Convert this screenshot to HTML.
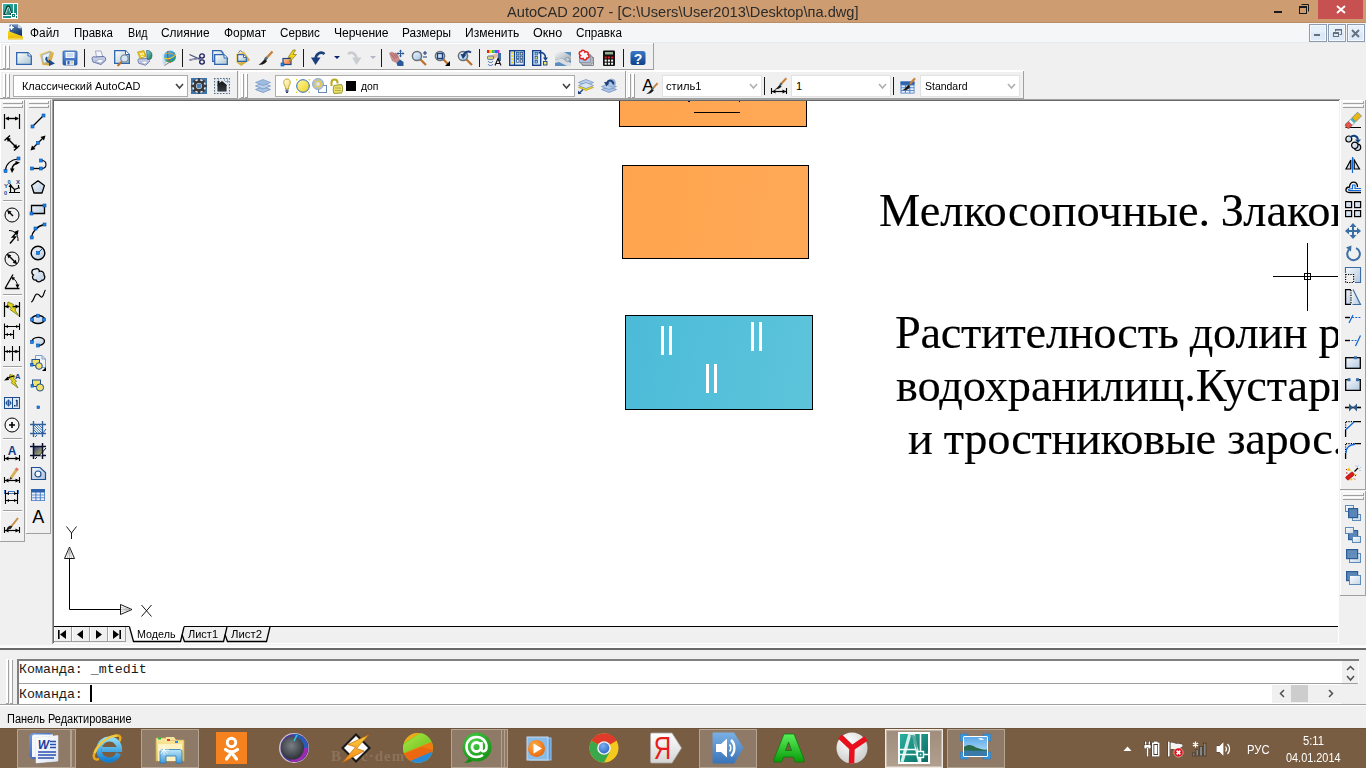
<!DOCTYPE html>
<html lang="ru"><head><meta charset="utf-8"><title>AutoCAD 2007</title>
<style>
*{box-sizing:border-box;margin:0;padding:0}
html,body{width:1366px;height:768px;overflow:hidden}
body{position:relative;background:#f0f0f0;font-family:"Liberation Sans",sans-serif;font-size:12px;color:#000}
div,span.tx,svg{position:absolute}
svg{overflow:visible}
.tx{white-space:nowrap;display:block}
.f-serif{font-family:"Liberation Serif",serif}
.f-mono{font-family:"Liberation Mono",monospace}
.f-b{font-weight:bold}
#draw{overflow:hidden;background:#fff}
#draw .tx{-webkit-text-stroke:0.15px #000}
</style></head>
<body>
<!-- title bar -->
<div style="left:0px;top:0px;width:1366px;height:22px;background:#cd9c71;"></div>
<div style="left:0px;top:22px;width:1366px;height:1px;background:#b98d66;"></div>
<svg style="left:2px;top:3px" width="16" height="16" viewBox="0 0 16 16"><rect x="0" y="0" width="16" height="16" fill="#fff"/><defs><linearGradient id="gapp" x1="0" y1="0" x2="1" y2="1"><stop offset="0" stop-color="#35b8a8"/><stop offset="1" stop-color="#0b7a70"/></linearGradient></defs><rect x="1" y="1" width="14" height="14" fill="url(#gapp)"/><path d="M2.5 12L5.5 3.5H7L9.5 12" fill="none" stroke="#0a3f3a" stroke-width="2.2"/><path d="M3.5 11L5.8 4.5H6.8L8.5 10" fill="none" stroke="#e4f6f3" stroke-width="0.9"/><path d="M1 12.5H15M11.5 1V15" fill="none" stroke="#fff" stroke-width="1"/><rect x="9.5" y="10.5" width="4" height="4" fill="#0b7a70" stroke="#fff" stroke-width="1"/><rect x="11" y="12" width="1" height="1" fill="#fff"/></svg>
<span class="tx" style="left:507px;top:1px;height:22px;line-height:22px;font-size:15px;color:#2b2b2b;transform:scaleX(0.9743);transform-origin:0 0;">AutoCAD 2007 - [C:\Users\User2013\Desktop\па.dwg]</span>
<div style="left:1318px;top:0px;width:45px;height:19px;background:#c75050;"></div>
<div style="left:1274px;top:11px;width:8px;height:2px;background:#1a1a1a;"></div>
<svg style="left:1298px;top:3px" width="12" height="12" viewBox="0 0 12 12"><path d="M3.5 1.5H10.5V8.5" fill="none" stroke="#1a1a1a" stroke-width="1"/><rect x="1.5" y="3.5" width="7" height="7" fill="none" stroke="#1a1a1a" stroke-width="1"/><rect x="1" y="3" width="8" height="2" fill="#1a1a1a"/></svg>
<svg style="left:1336px;top:5px" width="10" height="9" viewBox="0 0 10 9"><path d="M1 1 L9 8 M9 1 L1 8" stroke="#fff" stroke-width="1.9" fill="none"/></svg>
<!-- menu bar -->
<div style="left:0px;top:23px;width:1366px;height:19px;background:#f5f6f7;"></div>
<div style="left:0px;top:42px;width:1366px;height:1px;background:#e9eaeb;"></div>
<svg style="left:8px;top:24px" width="16" height="16" viewBox="0 0 16 16"><defs><linearGradient id="gdoc" x1="0" y1="0" x2="0.6" y2="1"><stop offset="0" stop-color="#5c82b4"/><stop offset="1" stop-color="#14386a"/></linearGradient></defs><path d="M1.5 0.5H10L14 4V12.5L1.5 8Z" fill="url(#gdoc)"/><path d="M10 0.5L14 4H10Z" fill="#c9d6e8"/><path d="M6 0.5H10V4H14V6L6 2Z" fill="#8fa8cc" fill-opacity="0.5"/><defs><linearGradient id="gdoc2" x1="0" y1="0" x2="0" y2="1"><stop offset="0" stop-color="#f8d820"/><stop offset="1" stop-color="#e8b808"/></linearGradient></defs><path d="M0 7L15 12.5V15.5H0Z" fill="url(#gdoc2)"/><path d="M0.5 14.8H14.5" fill="none" stroke="#fbe98a" stroke-width="0.8"/><path d="M3.5 1V6M1 3.5H6" fill="none" stroke="#fff" stroke-width="1"/><path d="M1.8 1.8L5.2 5.2M5.2 1.8L1.8 5.2" fill="none" stroke="#fff" stroke-width="0.6"/><circle cx="3.5" cy="3.5" r="1" fill="#fff"/></svg>
<span class="tx" style="left:30px;top:24px;height:18px;line-height:18px;font-size:12px;transform:scaleX(0.9898);transform-origin:0 0;">Файл</span>
<span class="tx" style="left:74px;top:24px;height:18px;line-height:18px;font-size:12px;transform:scaleX(0.9572);transform-origin:0 0;">Правка</span>
<span class="tx" style="left:128px;top:24px;height:18px;line-height:18px;font-size:12px;transform:scaleX(0.8936);transform-origin:0 0;">Вид</span>
<span class="tx" style="left:161px;top:24px;height:18px;line-height:18px;font-size:12px;transform:scaleX(0.9924);transform-origin:0 0;">Слияние</span>
<span class="tx" style="left:224px;top:24px;height:18px;line-height:18px;font-size:12px;transform:scaleX(0.9923);transform-origin:0 0;">Формат</span>
<span class="tx" style="left:280px;top:24px;height:18px;line-height:18px;font-size:12px;transform:scaleX(0.971);transform-origin:0 0;">Сервис</span>
<span class="tx" style="left:334px;top:24px;height:18px;line-height:18px;font-size:12px;transform:scaleX(1.0109);transform-origin:0 0;">Черчение</span>
<span class="tx" style="left:402px;top:24px;height:18px;line-height:18px;font-size:12px;transform:scaleX(0.9825);transform-origin:0 0;">Размеры</span>
<span class="tx" style="left:465px;top:24px;height:18px;line-height:18px;font-size:12px;transform:scaleX(1.0031);transform-origin:0 0;">Изменить</span>
<span class="tx" style="left:533px;top:24px;height:18px;line-height:18px;font-size:12px;transform:scaleX(1.0436);transform-origin:0 0;">Окно</span>
<span class="tx" style="left:576px;top:24px;height:18px;line-height:18px;font-size:12px;transform:scaleX(0.9772);transform-origin:0 0;">Справка</span>
<div style="left:1309px;top:24px;width:18px;height:18px;border:1px solid #8b9bb2;background:linear-gradient(#e6f0fa 0%,#e6f0fa 45%,#d9e7f6 50%,#dfebf8 100%);box-shadow:inset 0 0 0 1px #f4f8fd"></div>
<div style="left:1328px;top:24px;width:18px;height:18px;border:1px solid #8b9bb2;background:linear-gradient(#e6f0fa 0%,#e6f0fa 45%,#d9e7f6 50%,#dfebf8 100%);box-shadow:inset 0 0 0 1px #f4f8fd"></div>
<div style="left:1347px;top:24px;width:18px;height:18px;border:1px solid #8b9bb2;background:linear-gradient(#e6f0fa 0%,#e6f0fa 45%,#d9e7f6 50%,#dfebf8 100%);box-shadow:inset 0 0 0 1px #f4f8fd"></div>
<div style="left:1314px;top:34px;width:6px;height:2px;background:#64707f;"></div>
<svg style="left:1332px;top:28px" width="11" height="10" viewBox="0 0 11 10"><path d="M3.5 3.5V1.5H9.5V6.5H7.5" fill="none" stroke="#64707f" stroke-width="1"/><rect x="1.5" y="4.5" width="5" height="4" fill="none" stroke="#64707f"/><rect x="1" y="4" width="6" height="2" fill="#64707f"/><rect x="3" y="1" width="7" height="1.6" fill="#64707f"/></svg>
<svg style="left:1351px;top:29px" width="9" height="9" viewBox="0 0 9 9"><path d="M1 1 L8 8 M8 1 L1 8" stroke="#64707f" stroke-width="1.9" fill="none"/></svg>
<!-- standard toolbar -->
<div style="left:0px;top:43px;width:654px;height:1px;background:#ffffff;"></div>
<div style="left:0px;top:43px;width:1px;height:27px;background:#ffffff;"></div>
<div style="left:0px;top:69px;width:654px;height:1px;background:#a0a0a0;"></div>
<div style="left:653px;top:43px;width:1px;height:27px;background:#a0a0a0;"></div>
<div style="left:3px;top:45px;width:2px;height:23px;background:#ffffff;"></div>
<div style="left:5px;top:46px;width:1px;height:23px;background:#a0a0a0;"></div>
<div style="left:3px;top:68px;width:3px;height:1px;background:#a0a0a0;"></div>
<div style="left:7px;top:45px;width:2px;height:23px;background:#ffffff;"></div>
<div style="left:9px;top:46px;width:1px;height:23px;background:#a0a0a0;"></div>
<div style="left:7px;top:68px;width:3px;height:1px;background:#a0a0a0;"></div>
<svg style="left:16px;top:50px" width="16" height="16" viewBox="0 0 16 16"><defs><linearGradient id="gnew" x1="0" y1="0" x2="1" y2="1"><stop offset="0" stop-color="#ffffff"/><stop offset="1" stop-color="#a9c6d0"/></linearGradient></defs><path d="M0.7 2.7H12L15.3 6V14.3H0.7Z" fill="url(#gnew)" stroke="#2f64ae" stroke-width="1.3"/><path d="M12 2.7V6H15.3" fill="#fff" stroke="#2f64ae" stroke-width="1"/></svg>
<svg style="left:39px;top:50px" width="16" height="16" viewBox="0 0 16 16"><defs><linearGradient id="gop" x1="0" y1="0" x2="1" y2="1"><stop offset="0" stop-color="#f6d978"/><stop offset="1" stop-color="#c9962a"/></linearGradient></defs><path d="M0.5 4L11 0.5L15 3L11 15.5L3.5 15Z" fill="url(#gop)"/><path d="M3 5L11.5 2L8 12L4.5 13.5Z" fill="#eaf1f8" stroke="#8fa9c9" stroke-width="0.8"/><path d="M8 7C6.5 9 7.5 11.5 11 12.5" fill="none" stroke="#1f4a8a" stroke-width="2"/><path d="M10 9.5L16 13.5L10 16Z" fill="#1f4a8a"/></svg>
<svg style="left:62px;top:50px" width="16" height="16" viewBox="0 0 16 16"><defs><linearGradient id="gsv" x1="0" y1="0" x2="0" y2="1"><stop offset="0" stop-color="#6f9fe0"/><stop offset="1" stop-color="#2a5cb0"/></linearGradient></defs><rect x="1" y="1" width="14" height="14" rx="1" fill="url(#gsv)" stroke="#2455a5" stroke-width="0.8"/><rect x="3.5" y="2" width="9" height="6" fill="#eef4fb"/><path d="M5 4H11M5 6H11" fill="none" stroke="#9db9dc" stroke-width="0.8"/><rect x="4" y="10.5" width="8" height="4.5" fill="#dfe7f2"/><rect x="5.5" y="11" width="2" height="3.5" fill="#2a5cb0"/><rect x="9" y="11.5" width="2" height="2" fill="#d9d08a"/></svg>
<div style="left:84px;top:49px;width:1px;height:18px;background:#1a1a1a;"></div>
<svg style="left:91px;top:50px" width="16" height="16" viewBox="0 0 16 16"><path d="M4.5 1H10L12 7H5.5Z" fill="#f4f6fb" stroke="#8c98c0" stroke-width="0.8"/><path d="M1 8.5C1 6.5 3 6.5 4 7L12 6.5C14.5 6.5 15 8.5 14.5 10.5L10 14.5L2 12Z" fill="#c4cde6" stroke="#5c6a9c" stroke-width="0.9"/><path d="M4 11L9 13L13.5 10.5L9.5 9.5Z" fill="#fff" stroke="#8c98c0" stroke-width="0.6"/></svg>
<svg style="left:114px;top:50px" width="16" height="16" viewBox="0 0 16 16"><defs><linearGradient id="gpv" x1="0" y1="0" x2="1" y2="1"><stop offset="0" stop-color="#ffffff"/><stop offset="1" stop-color="#a9c6d0"/></linearGradient></defs><path d="M0.7 0.7H11.5L15.3 4.5V13.3H0.7Z" fill="url(#gpv)" stroke="#2f64ae" stroke-width="1.3"/><path d="M11.5 0.7V4.5H15.3" fill="#fff" stroke="#2f64ae" stroke-width="1"/><path d="M8 11.5L3.5 16" fill="none" stroke="#b8702a" stroke-width="2"/><circle cx="10.5" cy="8.5" r="3.7" fill="#d5e6f6" fill-opacity="0.9" stroke="#7f8a99" stroke-width="1.3"/></svg>
<svg style="left:137px;top:50px" width="16" height="16" viewBox="0 0 16 16"><g transform="translate(0 3) scale(0.85)"><path d="M4.5 1H10L12 7H5.5Z" fill="#f4f6fb" stroke="#8c98c0" stroke-width="0.8"/><path d="M1 8.5C1 6.5 3 6.5 4 7L12 6.5C14.5 6.5 15 8.5 14.5 10.5L10 14.5L2 12Z" fill="#c4cde6" stroke="#5c6a9c" stroke-width="0.9"/><path d="M4 11L9 13L13.5 10.5L9.5 9.5Z" fill="#fff" stroke="#8c98c0" stroke-width="0.6"/></g><defs><linearGradient id="gpb" x1="0" y1="0" x2="1" y2="1"><stop offset="0" stop-color="#7fd0f0"/><stop offset="1" stop-color="#1a7a3a"/></linearGradient></defs><path d="M9.5 0.5C14 0 16.5 4 14 9L10.5 9.5Z" fill="url(#gpb)" stroke="#1f4a6a" stroke-width="0.6"/><path d="M0.5 2L7 0.5L9 6.5L3 8.5Z" fill="#f0c818" stroke="#b08a10" stroke-width="0.6"/><circle cx="4" cy="4" r="0.9" fill="#fff"/><circle cx="6.2" cy="3.8" r="0.9" fill="#fff"/><rect x="4" y="5.8" width="2.5" height="1" fill="#fff"/></svg>
<svg style="left:160px;top:50px" width="16" height="16" viewBox="0 0 16 16"><defs><linearGradient id="gdw" x1="0" y1="0" x2="1" y2="0"><stop offset="0" stop-color="#f6f9fd"/><stop offset="1" stop-color="#b9c9e4"/></linearGradient></defs><path d="M0.5 5L6 3V13L4.5 15.5L0.5 12Z" fill="url(#gdw)"/><path d="M4.5 15.5L10 12" stroke="#7a8190" stroke-width="1" fill="none"/><defs><linearGradient id="ggl" x1="0" y1="0" x2="1" y2="1"><stop offset="0" stop-color="#5fc3ee"/><stop offset="1" stop-color="#0e6fae"/></linearGradient></defs><circle cx="10" cy="6.5" r="6" fill="url(#ggl)"/><path d="M8 1C6.5 5 8 10 11 12.5" fill="none" stroke="#d83a2a" stroke-width="1.1"/><path d="M4.5 8C8 10 13 8 16 4.5" fill="none" stroke="#e8d81c" stroke-width="1.1"/><path d="M5 4C8 2.5 12 3 15 5.5" fill="none" stroke="#f0a030" stroke-width="0.9"/><path d="M6 11C9 12.5 13 11 15 9" fill="none" stroke="#3aa84a" stroke-width="1.1"/></svg>
<div style="left:182px;top:49px;width:1px;height:18px;background:#1a1a1a;"></div>
<svg style="left:189px;top:50px" width="16" height="16" viewBox="0 0 16 16"><path d="M0.5 4.5L11.5 9.5M0.5 10L11.5 8" fill="none" stroke="#4a4f7a" stroke-width="1.3"/><path d="M0.5 9.5L9 8.3V9.3L0.5 10.5Z" fill="#9aa0c0"/><ellipse cx="13" cy="6" rx="2.3" ry="2.1" fill="none" stroke="#141a5a" stroke-width="1.3"/><ellipse cx="13" cy="12" rx="2.3" ry="2.1" fill="none" stroke="#141a5a" stroke-width="1.3"/></svg>
<svg style="left:212px;top:50px" width="16" height="16" viewBox="0 0 16 16"><defs><linearGradient id="gcp1" x1="0" y1="0" x2="1" y2="1"><stop offset="0" stop-color="#ffffff"/><stop offset="1" stop-color="#a9c6d0"/></linearGradient></defs><path d="M0.7 0.7H9L11 3V11.3H0.7Z" fill="url(#gcp1)" stroke="#2f64ae" stroke-width="1.3"/><defs><linearGradient id="gcp2" x1="0" y1="0" x2="1" y2="1"><stop offset="0" stop-color="#ffffff"/><stop offset="1" stop-color="#a9c6d0"/></linearGradient></defs><path d="M2.7 4.7H12L15.3 8V14.3H2.7Z" fill="url(#gcp2)" stroke="#2f64ae" stroke-width="1.3"/><path d="M12 4.7V8H15.3" fill="#fff" stroke="#2f64ae" stroke-width="1"/></svg>
<svg style="left:235px;top:50px" width="16" height="16" viewBox="0 0 16 16"><defs><linearGradient id="gps" x1="0" y1="0" x2="1" y2="1"><stop offset="0" stop-color="#f2d672"/><stop offset="1" stop-color="#c49a2a"/></linearGradient></defs><path d="M1 4L9 1.5L15 10L6 16L1.5 12.5Z" fill="url(#gps)"/><path d="M3.5 3L5 0.5L7.5 2" fill="#fff" stroke="#7a8190" stroke-width="1"/><defs><linearGradient id="gps2" x1="0" y1="0" x2="1" y2="1"><stop offset="0" stop-color="#ffffff"/><stop offset="1" stop-color="#a9c6d0"/></linearGradient></defs><path d="M2.7 4.7H8.5L11.3 7.5V11.3H2.7Z" fill="url(#gps2)" stroke="#2f64ae" stroke-width="1.2"/><path d="M8.5 4.7V7.5H11.3" fill="#fff" stroke="#2f64ae" stroke-width="0.9"/></svg>
<svg style="left:258px;top:50px" width="16" height="16" viewBox="0 0 16 16"><path d="M8.5 8L14.5 1.5" fill="none" stroke="#c8803a" stroke-width="2.4"/><path d="M7 9.5L9 7.5" fill="none" stroke="#4a6a7a" stroke-width="2.6"/><path d="M0.5 14.5C4 13.5 5 10 7 9L9 11C8 13 4.5 15.5 0.5 14.5Z" fill="#1a1a1a"/></svg>
<svg style="left:281px;top:50px" width="16" height="16" viewBox="0 0 16 16"><defs><linearGradient id="gbe" x1="0" y1="0" x2="1" y2="1"><stop offset="0" stop-color="#ffc8a0"/><stop offset="1" stop-color="#f07030"/></linearGradient></defs><rect x="2" y="8.5" width="8" height="6" fill="url(#gbe)" stroke="#1f4a8a" stroke-width="1.2"/><rect x="0" y="13" width="3" height="3" fill="#1787ea" stroke="#0a4ea6" stroke-width="0.6"/><path d="M12 0L7 7.5H10L8.5 12L15.5 4.5H12L14.5 0Z" fill="#f2d21c" stroke="#8a7a10" stroke-width="0.7"/></svg>
<div style="left:303px;top:49px;width:1px;height:18px;background:#1a1a1a;"></div>
<svg style="left:310px;top:50px" width="16" height="16" viewBox="0 0 16 16"><path d="M14.5 4C11 1 5.5 3.5 5.5 9.5" fill="none" stroke="#1a3f7a" stroke-width="2.6"/><path d="M1 7.5L5.5 15L10.5 7.5Z" fill="#1a3f7a"/></svg>
<svg style="left:334px;top:56px" width="6" height="3" viewBox="0 0 6 3"><path d="M0 0H6L3 3Z" fill="#0a246a"/></svg>
<svg style="left:346px;top:50px" width="16" height="16" viewBox="0 0 16 16"><path d="M2 4C5.5 1 10.5 3.5 10.5 9.5" fill="none" stroke="#c9cdd2" stroke-width="2.6"/><path d="M6 7.5L10.5 15L15.5 7.5Z" fill="#c9cdd2"/></svg>
<svg style="left:370px;top:56px" width="6" height="3" viewBox="0 0 6 3"><path d="M0 0H6L3 3Z" fill="#b4b4c8"/></svg>
<div style="left:381px;top:49px;width:1px;height:18px;background:#1a1a1a;"></div>
<svg style="left:388px;top:50px" width="16" height="16" viewBox="0 0 16 16"><path d="M1 3L4 1.5L6 3L8 2.5L10 5L12 10L8.5 13L4 11Z" fill="#c98a8a"/><path d="M3 4L7 9M5 3L8.5 8M7.5 3.5L10 7.5" fill="none" stroke="#a05a5a" stroke-width="0.7"/><path d="M8.5 13L12 9.5L15.5 12V16H9.5Z" fill="#2a5a9a"/><path d="M12.5 0V7M9 3.5H16" fill="none" stroke="#2a5a9a" stroke-width="1"/><path d="M12.5 -0.5L14 1.5H11ZM12.5 7.5L14 5.5H11ZM8.5 3.5L10.5 2V5ZM16.5 3.5L14.5 2V5Z" fill="#2a5a9a"/></svg>
<svg style="left:411px;top:50px" width="16" height="16" viewBox="0 0 16 16"><path d="M9 9L15 15" fill="none" stroke="#b8702a" stroke-width="2.2"/><defs><linearGradient id="gz1" x1="0" y1="0" x2="1" y2="1"><stop offset="0" stop-color="#f2f8fd"/><stop offset="1" stop-color="#9cc2e6"/></linearGradient></defs><circle cx="6" cy="6" r="4.6" fill="url(#gz1)" stroke="#6a7078" stroke-width="1.5"/><path d="M12 3H16M14 1V5M12 7H16" fill="none" stroke="#1a3f7a" stroke-width="1.1"/></svg>
<svg style="left:434px;top:50px" width="16" height="16" viewBox="0 0 16 16"><path d="M9 9L15 15" fill="none" stroke="#b8702a" stroke-width="2.2"/><defs><linearGradient id="gz2" x1="0" y1="0" x2="1" y2="1"><stop offset="0" stop-color="#f2f8fd"/><stop offset="1" stop-color="#9cc2e6"/></linearGradient></defs><circle cx="6" cy="6" r="4.6" fill="url(#gz2)" stroke="#6a7078" stroke-width="1.5"/><rect x="3.5" y="3.5" width="5" height="5" fill="none" stroke="#1a3f7a" stroke-width="1.3"/><path d="M16 11V16H11Z" fill="#000"/></svg>
<svg style="left:457px;top:50px" width="16" height="16" viewBox="0 0 16 16"><path d="M9 9L15 15" fill="none" stroke="#b8702a" stroke-width="2.2"/><defs><linearGradient id="gz3" x1="0" y1="0" x2="1" y2="1"><stop offset="0" stop-color="#f2f8fd"/><stop offset="1" stop-color="#9cc2e6"/></linearGradient></defs><circle cx="6" cy="6" r="4.6" fill="url(#gz3)" stroke="#6a7078" stroke-width="1.5"/><path d="M14 2.5C11 0.5 7 2 6.5 6" fill="none" stroke="#1a3f7a" stroke-width="2"/><path d="M3.5 4L9.5 4.5L6 9Z" fill="#1a3f7a"/></svg>
<div style="left:479px;top:49px;width:1px;height:18px;background:#1a1a1a;"></div>
<svg style="left:486px;top:50px" width="16" height="16" viewBox="0 0 16 16"><rect x="1" y="0" width="2.5" height="3" fill="#e81c1c"/><rect x="3.5" y="0" width="2.5" height="3" fill="#f0d81c"/><rect x="6" y="0" width="2.5" height="3" fill="#3ac83a"/><rect x="8.5" y="0" width="2.5" height="3" fill="#2a6ae8"/><rect x="11" y="0" width="2.5" height="3" fill="#d81cd8"/><path d="M4 6L11 3L13.5 5.5L9 8.5L4 8Z" fill="#e8b8a0"/><rect x="12" y="3" width="3" height="8" fill="#3a6aaa"/><rect x="1.5" y="6" width="6" height="3.5" rx="1" fill="#d8d07a" stroke="#3a6aaa" stroke-width="0.8"/><path d="M2 11C3 13 6 13 7 11M2 14C3 16 6 16 7 14" fill="none" stroke="#3a6aaa" stroke-width="1"/><path d="M9 15.5L12 8.5L15 15.5M10 13.5H14" fill="none" stroke="#111" stroke-width="1.1"/></svg>
<svg style="left:509px;top:50px" width="16" height="16" viewBox="0 0 16 16"><rect x="0.7" y="0.7" width="14.6" height="14.6" fill="#dbe9f8" stroke="#143f8a" stroke-width="1.4"/><path d="M5.5 1V15" fill="none" stroke="#143f8a" stroke-width="1.2"/><rect x="2" y="2" width="2" height="1.8" fill="#f0d81c"/><rect x="2" y="5.2" width="2" height="1.8" fill="#f0d81c"/><rect x="2" y="8.4" width="2" height="1.8" fill="#f0d81c"/><rect x="2" y="11.6" width="2" height="1.8" fill="#f0d81c"/><rect x="7.5" y="2.5" width="2.5" height="2.5" fill="#8fd0e8" stroke="#143f8a" stroke-width="0.7"/><rect x="11.2" y="2.5" width="2.5" height="2.5" fill="#f0e86a" stroke="#143f8a" stroke-width="0.7"/><rect x="7.5" y="6.1" width="2.5" height="2.5" fill="#8fd0e8" stroke="#143f8a" stroke-width="0.7"/><rect x="11.2" y="6.1" width="2.5" height="2.5" fill="#f0e86a" stroke="#143f8a" stroke-width="0.7"/><rect x="7.5" y="9.7" width="2.5" height="2.5" fill="#ffffff" stroke="#143f8a" stroke-width="0.7"/><rect x="11.2" y="9.7" width="2.5" height="2.5" fill="#f0e86a" stroke="#143f8a" stroke-width="0.7"/></svg>
<svg style="left:532px;top:50px" width="16" height="16" viewBox="0 0 16 16"><rect x="0.7" y="0.7" width="8" height="14.6" fill="#dbe9f8" stroke="#143f8a" stroke-width="1.4"/><rect x="3" y="2.5" width="2.5" height="2.5" fill="#8fd0e8" stroke="#143f8a" stroke-width="0.7"/><rect x="3" y="6.5" width="2.5" height="2.5" fill="#f0e86a" stroke="#143f8a" stroke-width="0.7"/><rect x="3" y="10.5" width="2.5" height="2.5" fill="#8fd0e8" stroke="#143f8a" stroke-width="0.7"/><path d="M6.5 3C10.5 1.5 13.5 4 13.5 8" fill="none" stroke="#143f8a" stroke-width="1.6"/><path d="M11 7.5H16L13.5 11Z" fill="#143f8a"/><rect x="11.5" y="11.5" width="3.5" height="3.5" fill="#f0e86a" stroke="#143f8a" stroke-width="0.9"/></svg>
<svg style="left:555px;top:50px" width="16" height="16" viewBox="0 0 16 16"><defs><linearGradient id="gss" x1="0" y1="0" x2="1" y2="1"><stop offset="0" stop-color="#f4f6f8"/><stop offset="1" stop-color="#9aa4ae"/></linearGradient></defs><rect x="0" y="2" width="16" height="14" fill="#5a8fc0"/><path d="M0 2H9L16 6V11L7 8.5L0 10Z" fill="url(#gss)"/><path d="M0 10L7 8.5L16 13V16H12L4 12L0 13Z" fill="#d9dde2"/><circle cx="12.5" cy="9.5" r="2.2" fill="#c4cad0" stroke="#8a949e" stroke-width="0.8"/></svg>
<svg style="left:578px;top:50px" width="16" height="16" viewBox="0 0 16 16"><path d="M4.5 7.5H15.5V15.5H4.5Z" fill="#d9dde2" stroke="#6a7078" stroke-width="0.8"/><path d="M3 6H14V14H3Z" fill="#e8ebef" stroke="#6a7078" stroke-width="0.8"/><path d="M1.5 4.5H12.5V12.5H1.5Z" fill="#a9c6e6" stroke="#6a7078" stroke-width="0.6"/><path d="M3 1.5C4.5 -0.5 7 0.5 7 2C9 1 11 2.5 10 4.5C12 5.5 11 8.5 9 8C8.5 10.5 5.5 10.5 5 8.5C2.5 9.5 0.5 7 2.5 5.5C0.5 4.5 1 1.5 3 1.5Z" fill="#f4f6fa" stroke="#e81c1c" stroke-width="1.5"/></svg>
<svg style="left:601px;top:50px" width="16" height="16" viewBox="0 0 16 16"><rect x="2" y="0.5" width="12" height="15.5" rx="1" fill="#111"/><rect x="4" y="2" width="8" height="2.5" fill="#8fae8a"/><rect x="3.7" y="6.5" width="2" height="2" fill="#e81c1c"/><rect x="6.9" y="6.5" width="2" height="2" fill="#e81c1c"/><rect x="10.1" y="6.5" width="2" height="2" fill="#e81c1c"/><rect x="3.7" y="9.6" width="2" height="2" fill="#fff"/><rect x="6.9" y="9.6" width="2" height="2" fill="#fff"/><rect x="10.1" y="9.6" width="2" height="2" fill="#fff"/><rect x="3.7" y="12.7" width="2" height="2" fill="#fff"/><rect x="6.9" y="12.7" width="2" height="2" fill="#fff"/><rect x="10.1" y="12.7" width="2" height="2" fill="#fff"/></svg>
<div style="left:623px;top:49px;width:1px;height:18px;background:#1a1a1a;"></div>
<svg style="left:630px;top:50px" width="16" height="16" viewBox="0 0 16 16"><defs><linearGradient id="ghl" x1="0" y1="0" x2="0" y2="1"><stop offset="0" stop-color="#3a7ac8"/><stop offset="1" stop-color="#0e3f8a"/></linearGradient></defs><rect x="0.5" y="1" width="15" height="14" rx="2.5" fill="url(#ghl)"/><text x="8" y="13.5" font-family="Liberation Sans, sans-serif" font-weight="bold" font-size="14" text-anchor="middle" fill="#fff">?</text></svg>
<!-- workspaces / layers / styles toolbars -->
<div style="left:0px;top:70px;width:1024px;height:1px;background:#ffffff;"></div>
<div style="left:0px;top:71px;width:238px;height:1px;background:#ffffff;"></div>
<div style="left:0px;top:71px;width:1px;height:28px;background:#ffffff;"></div>
<div style="left:0px;top:98px;width:238px;height:1px;background:#a0a0a0;"></div>
<div style="left:237px;top:71px;width:1px;height:28px;background:#a0a0a0;"></div>
<div style="left:3px;top:73px;width:2px;height:24px;background:#ffffff;"></div>
<div style="left:5px;top:74px;width:1px;height:24px;background:#a0a0a0;"></div>
<div style="left:3px;top:97px;width:3px;height:1px;background:#a0a0a0;"></div>
<div style="left:7px;top:73px;width:2px;height:24px;background:#ffffff;"></div>
<div style="left:9px;top:74px;width:1px;height:24px;background:#a0a0a0;"></div>
<div style="left:7px;top:97px;width:3px;height:1px;background:#a0a0a0;"></div>
<div style="left:13px;top:75px;width:175px;height:22px;background:#fff;border:1px solid #acacac;"></div>
<svg style="left:175px;top:83px" width="9" height="6" viewBox="0 0 9 6"><path d="M1 1 L4.5 5 L8 1" fill="none" stroke="#444" stroke-width="1.6"/></svg>
<span class="tx" style="left:22px;top:78px;height:16px;line-height:16px;font-size:11px;transform:scaleX(0.992);transform-origin:0 0;">Классический AutoCAD</span>
<svg style="left:191px;top:78px" width="16" height="16" viewBox="0 0 16 16"><rect x="0" y="0" width="16" height="16" fill="#3f74a8"/><circle cx="8" cy="8" r="7" fill="#e9eef4"/><circle cx="8" cy="8" r="4.2" fill="none" stroke="#3a3a3a" stroke-width="2.6"/><rect x="6.7" y="0.3" width="2.6" height="3.4" fill="#3a3a3a" transform="rotate(0 8 8)"/><rect x="6.7" y="0.3" width="2.6" height="3.4" fill="#3a3a3a" transform="rotate(45 8 8)"/><rect x="6.7" y="0.3" width="2.6" height="3.4" fill="#3a3a3a" transform="rotate(90 8 8)"/><rect x="6.7" y="0.3" width="2.6" height="3.4" fill="#3a3a3a" transform="rotate(135 8 8)"/><rect x="6.7" y="0.3" width="2.6" height="3.4" fill="#3a3a3a" transform="rotate(180 8 8)"/><rect x="6.7" y="0.3" width="2.6" height="3.4" fill="#3a3a3a" transform="rotate(225 8 8)"/><rect x="6.7" y="0.3" width="2.6" height="3.4" fill="#3a3a3a" transform="rotate(270 8 8)"/><rect x="6.7" y="0.3" width="2.6" height="3.4" fill="#3a3a3a" transform="rotate(315 8 8)"/><circle cx="8" cy="8" r="2.4" fill="#4a80b8"/></svg>
<svg style="left:214px;top:78px" width="16" height="16" viewBox="0 0 16 16"><rect x="0" y="0" width="16" height="16" fill="#dfe8f2"/><path d="M0.5 0V16M15.5 0V16M0 0.5H16M0 15.5H16" fill="none" stroke="#5a6a7a" stroke-width="1" stroke-dasharray="1.5 1.5"/><path d="M4.5 0V4M10.5 0V3M13.5 0V5M11 3.5H16" fill="none" stroke="#8a9aaa" stroke-width="0.8"/><defs><linearGradient id="ghm" x1="0" y1="0" x2="0" y2="1"><stop offset="0" stop-color="#111"/><stop offset="1" stop-color="#3a3f45"/></linearGradient></defs><path d="M2 7.5L8 2.5L14 7.5H13V14H3V7.5Z" fill="url(#ghm)" stroke="#fff" stroke-width="0.8"/><path d="M3.5 3H5.5V5.5L3.5 7Z" fill="#111"/></svg>
<div style="left:239px;top:71px;width:387px;height:1px;background:#ffffff;"></div>
<div style="left:239px;top:71px;width:1px;height:28px;background:#ffffff;"></div>
<div style="left:239px;top:98px;width:387px;height:1px;background:#a0a0a0;"></div>
<div style="left:625px;top:71px;width:1px;height:28px;background:#a0a0a0;"></div>
<div style="left:241px;top:73px;width:2px;height:24px;background:#ffffff;"></div>
<div style="left:243px;top:74px;width:1px;height:24px;background:#a0a0a0;"></div>
<div style="left:241px;top:97px;width:3px;height:1px;background:#a0a0a0;"></div>
<div style="left:245px;top:73px;width:2px;height:24px;background:#ffffff;"></div>
<div style="left:247px;top:74px;width:1px;height:24px;background:#a0a0a0;"></div>
<div style="left:245px;top:97px;width:3px;height:1px;background:#a0a0a0;"></div>
<svg style="left:255px;top:78px" width="16" height="16" viewBox="0 0 16 16"><path d="M8 8.5L15.5 11.5L8 14.5L0.5 11.5Z" fill="#a9c4e4" stroke="#6a8ab8" stroke-width="0.7"/><path d="M8 5L15.5 8L8 11L0.5 8Z" fill="#b9d0ec" stroke="#6a8ab8" stroke-width="0.7"/><path d="M8 1.5L15.5 4.5L8 7.5L0.5 4.5Z" fill="#9dbce0" stroke="#7a9ac8" stroke-width="0.7"/></svg>
<div style="left:275px;top:75px;width:300px;height:22px;background:#fff;border:1px solid #acacac;"></div>
<svg style="left:562px;top:83px" width="9" height="6" viewBox="0 0 9 6"><path d="M1 1 L4.5 5 L8 1" fill="none" stroke="#444" stroke-width="1.6"/></svg>
<svg style="left:282px;top:78px" width="12" height="16" viewBox="0 0 12 16"><defs><linearGradient id="gbu" x1="0" y1="0" x2="1" y2="1"><stop offset="0" stop-color="#fffbe0"/><stop offset="1" stop-color="#f4e06a"/></linearGradient></defs><path d="M5 1C1.5 1 0.8 5 3 8C3.5 9 3.5 10 3.5 11H6.5C6.5 10 6.5 9 7 8C9.2 5 8.5 1 5 1Z" fill="url(#gbu)" stroke="#b89a1c" stroke-width="0.9"/><rect x="3.5" y="11.5" width="3" height="2.5" fill="#5a6a9a"/><rect x="4" y="14" width="2" height="1" fill="#2a3a6a"/></svg>
<svg style="left:296px;top:78px" width="14" height="16" viewBox="0 0 14 16"><defs><linearGradient id="gsu" x1="0" y1="0" x2="1" y2="1"><stop offset="0" stop-color="#fff8a0"/><stop offset="1" stop-color="#f0d020"/></linearGradient></defs><circle cx="7" cy="8" r="6.3" fill="url(#gsu)" stroke="#2a6ab8" stroke-width="1"/><rect x="0" y="1" width="1.5" height="1.5" fill="#e8d81c"/><rect x="12.5" y="1" width="1.5" height="1.5" fill="#e8d81c"/><rect x="0" y="13.5" width="1.5" height="1.5" fill="#e8d81c"/><rect x="12.5" y="13.5" width="1.5" height="1.5" fill="#e8d81c"/></svg>
<svg style="left:312px;top:78px" width="15" height="16" viewBox="0 0 15 16"><rect x="6.5" y="7.5" width="8" height="7" fill="#fff" stroke="#6a8ab8" stroke-width="1"/><circle cx="6" cy="6" r="5.5" fill="#a9c4e4" stroke="#7a9ac8" stroke-width="0.8"/><circle cx="6" cy="6" r="2.6" fill="#d8e4f2" stroke="#e0c85a" stroke-width="1.4"/><rect x="5.4" y="0.8" width="1.2" height="2" fill="#e0c85a" transform="rotate(0 6 6)"/><rect x="5.4" y="0.8" width="1.2" height="2" fill="#e0c85a" transform="rotate(45 6 6)"/><rect x="5.4" y="0.8" width="1.2" height="2" fill="#e0c85a" transform="rotate(90 6 6)"/><rect x="5.4" y="0.8" width="1.2" height="2" fill="#e0c85a" transform="rotate(135 6 6)"/><rect x="5.4" y="0.8" width="1.2" height="2" fill="#e0c85a" transform="rotate(180 6 6)"/><rect x="5.4" y="0.8" width="1.2" height="2" fill="#e0c85a" transform="rotate(225 6 6)"/><rect x="5.4" y="0.8" width="1.2" height="2" fill="#e0c85a" transform="rotate(270 6 6)"/><rect x="5.4" y="0.8" width="1.2" height="2" fill="#e0c85a" transform="rotate(315 6 6)"/></svg>
<svg style="left:329px;top:78px" width="15" height="16" viewBox="0 0 15 16"><path d="M2.5 8V4.5C2.5 0.5 8.5 0.5 8.5 4.5V5.5" fill="none" stroke="#b8a81c" stroke-width="2"/><path d="M5 7.5L12.5 6.5C14 7.5 14 14.5 12.5 15L5 15.5C4 14 4 9 5 7.5Z" fill="#e8e06a" stroke="#8a8a1c" stroke-width="0.9"/><path d="M6 10H12M6 12.5H12" fill="none" stroke="#a8a03a" stroke-width="0.8"/></svg>
<div style="left:346px;top:81px;width:10px;height:10px;background:#000;"></div>
<span class="tx" style="left:361px;top:78px;height:16px;line-height:16px;font-size:11px;transform:scaleX(0.9463);transform-origin:0 0;">доп</span>
<svg style="left:578px;top:78px" width="16" height="16" viewBox="0 0 16 16"><path d="M8 1.5L15.5 4.5L8 7.5L0.5 4.5Z" fill="#b9d0ec" stroke="#6a8ab8" stroke-width="0.7"/><path d="M8 6.5L15.5 9.5L8 12.5L0.5 9.5Z" fill="#f0d81c" stroke="#b8a01c" stroke-width="0.7"/><path d="M8 4.5L15.5 7.5L8 10.5L0.5 7.5Z" fill="#d8e4f2" stroke="#6a8ab8" stroke-width="0.7"/><path d="M1.5 15L5 11.5" fill="none" stroke="#1a3f7a" stroke-width="1.3"/><path d="M0 16V12.5L3.5 16Z" fill="#1a3f7a"/></svg>
<svg style="left:601px;top:78px" width="16" height="16" viewBox="0 0 16 16"><path d="M8 8.5L15.5 11.5L8 14.5L0.5 11.5Z" fill="#a9c4e4" stroke="#6a8ab8" stroke-width="0.7"/><path d="M8 5.5L15.5 8.5L8 11.5L0.5 8.5Z" fill="#b9d0ec" stroke="#6a8ab8" stroke-width="0.7"/><circle cx="10.5" cy="5" r="4" fill="#a9c4e4" stroke="#7a9ac8" stroke-width="0.6"/><path d="M12.5 6.5C12.5 2 7 1.5 6 5" fill="none" stroke="#1a3f7a" stroke-width="1.8"/><path d="M3 4L8.5 4.5L5.5 8.5Z" fill="#1a3f7a"/></svg>
<div style="left:626px;top:71px;width:398px;height:1px;background:#ffffff;"></div>
<div style="left:626px;top:71px;width:1px;height:28px;background:#ffffff;"></div>
<div style="left:626px;top:98px;width:398px;height:1px;background:#a0a0a0;"></div>
<div style="left:1023px;top:71px;width:1px;height:28px;background:#a0a0a0;"></div>
<div style="left:628px;top:73px;width:2px;height:24px;background:#ffffff;"></div>
<div style="left:630px;top:74px;width:1px;height:24px;background:#a0a0a0;"></div>
<div style="left:628px;top:97px;width:3px;height:1px;background:#a0a0a0;"></div>
<div style="left:632px;top:73px;width:2px;height:24px;background:#ffffff;"></div>
<div style="left:634px;top:74px;width:1px;height:24px;background:#a0a0a0;"></div>
<div style="left:632px;top:97px;width:3px;height:1px;background:#a0a0a0;"></div>
<svg style="left:642px;top:78px" width="16" height="16" viewBox="0 0 16 16"><text x="6" y="13" font-family="Liberation Sans, sans-serif" font-size="17" text-anchor="middle" fill="#000">A</text><g transform="translate(4 4) scale(0.8)"><path d="M8.5 8L14.5 1.5" fill="none" stroke="#c8803a" stroke-width="2.4"/><path d="M7 9.5L9 7.5" fill="none" stroke="#4a6a7a" stroke-width="2.6"/><path d="M0.5 14.5C4 13.5 5 10 7 9L9 11C8 13 4.5 15.5 0.5 14.5Z" fill="#1a1a1a"/></g></svg>
<div style="left:662px;top:75px;width:100px;height:22px;background:#fff;border:1px solid #e2e2e2;"></div>
<svg style="left:749px;top:83px" width="9" height="6" viewBox="0 0 9 6"><path d="M1 1 L4.5 5 L8 1" fill="none" stroke="#b0b0b0" stroke-width="1.6"/></svg>
<span class="tx" style="left:666px;top:78px;height:16px;line-height:16px;font-size:11px;transform:scaleX(1.0157);transform-origin:0 0;">стиль1</span>
<div style="left:764px;top:77px;width:1px;height:18px;background:#1a1a1a;"></div>
<svg style="left:771px;top:78px" width="16" height="16" viewBox="0 0 16 16"><path d="M0.5 10V16M15.5 10V16" fill="none" stroke="#000" stroke-width="1.1"/><path d="M1 13.5H15" fill="none" stroke="#000" stroke-width="1.2"/><path d="M1 13.5L4.5 11.5V15.5Z" fill="#000"/><path d="M15 13.5L11.5 11.5V15.5Z" fill="#000"/><g transform="translate(3 -1) scale(0.85)"><path d="M8.5 8L14.5 1.5" fill="none" stroke="#c8803a" stroke-width="2.4"/><path d="M7 9.5L9 7.5" fill="none" stroke="#4a6a7a" stroke-width="2.6"/><path d="M0.5 14.5C4 13.5 5 10 7 9L9 11C8 13 4.5 15.5 0.5 14.5Z" fill="#1a1a1a"/></g></svg>
<div style="left:791px;top:75px;width:100px;height:22px;background:#fff;border:1px solid #e2e2e2;"></div>
<svg style="left:878px;top:83px" width="9" height="6" viewBox="0 0 9 6"><path d="M1 1 L4.5 5 L8 1" fill="none" stroke="#b0b0b0" stroke-width="1.6"/></svg>
<span class="tx" style="left:796px;top:78px;height:16px;line-height:16px;font-size:11px;">1</span>
<div style="left:893px;top:77px;width:1px;height:18px;background:#1a1a1a;"></div>
<svg style="left:900px;top:78px" width="16" height="16" viewBox="0 0 16 16"><rect x="0.5" y="3.5" width="14" height="12" fill="#4a7ec4"/><rect x="0.5" y="3.5" width="14" height="3" fill="#2f62ad"/><rect x="1.5" y="7.5" width="3.4" height="1.8" fill="#e9f0fa"/><rect x="5.9" y="7.5" width="3.4" height="1.8" fill="#e9f0fa"/><rect x="10.3" y="7.5" width="3.4" height="1.8" fill="#e9f0fa"/><rect x="1.5" y="10.2" width="3.4" height="1.8" fill="#e9f0fa"/><rect x="5.9" y="10.2" width="3.4" height="1.8" fill="#e9f0fa"/><rect x="10.3" y="10.2" width="3.4" height="1.8" fill="#e9f0fa"/><rect x="1.5" y="12.9" width="3.4" height="1.8" fill="#e9f0fa"/><rect x="5.9" y="12.9" width="3.4" height="1.8" fill="#e9f0fa"/><rect x="10.3" y="12.9" width="3.4" height="1.8" fill="#e9f0fa"/><g transform="translate(2 -1) scale(0.9)"><path d="M8.5 8L14.5 1.5" fill="none" stroke="#c8803a" stroke-width="2.4"/><path d="M7 9.5L9 7.5" fill="none" stroke="#4a6a7a" stroke-width="2.6"/><path d="M0.5 14.5C4 13.5 5 10 7 9L9 11C8 13 4.5 15.5 0.5 14.5Z" fill="#1a1a1a"/></g></svg>
<div style="left:920px;top:75px;width:100px;height:22px;background:#fff;border:1px solid #e2e2e2;"></div>
<svg style="left:1007px;top:83px" width="9" height="6" viewBox="0 0 9 6"><path d="M1 1 L4.5 5 L8 1" fill="none" stroke="#b0b0b0" stroke-width="1.6"/></svg>
<span class="tx" style="left:925px;top:78px;height:16px;line-height:16px;font-size:11px;transform:scaleX(0.9519);transform-origin:0 0;">Standard</span>
<!-- dimension + draw toolbars -->
<div style="left:0px;top:100px;width:25px;height:1px;background:#ffffff;"></div>
<div style="left:0px;top:100px;width:1px;height:442px;background:#ffffff;"></div>
<div style="left:0px;top:541px;width:25px;height:1px;background:#a0a0a0;"></div>
<div style="left:24px;top:100px;width:1px;height:442px;background:#a0a0a0;"></div>
<div style="left:3px;top:101px;width:20px;height:1px;background:#ffffff;"></div>
<div style="left:3px;top:103px;width:20px;height:1px;background:#a0a0a0;"></div>
<div style="left:22px;top:101px;width:1px;height:3px;background:#a0a0a0;"></div>
<div style="left:3px;top:101px;width:1px;height:2px;background:#ffffff;"></div>
<div style="left:3px;top:105px;width:20px;height:1px;background:#ffffff;"></div>
<div style="left:3px;top:107px;width:20px;height:1px;background:#a0a0a0;"></div>
<div style="left:22px;top:105px;width:1px;height:3px;background:#a0a0a0;"></div>
<div style="left:3px;top:105px;width:1px;height:2px;background:#ffffff;"></div>
<svg style="left:4px;top:113px" width="16" height="16" viewBox="0 0 16 16"><path d="M0.5 1V16M15.5 1V16" fill="none" stroke="#000" stroke-width="1.2"/><path d="M2 5.5H14" fill="none" stroke="#000" stroke-width="1.4"/><path d="M1 5.5L5 3.5V7.5Z" fill="#000"/><path d="M15 5.5L11 3.5V7.5Z" fill="#000"/></svg>
<svg style="left:4px;top:135px" width="16" height="16" viewBox="0 0 16 16"><path d="M3.5 3.5L12.5 12.5" fill="none" stroke="#000" stroke-width="1.4"/><path d="M0.5 5.5L6 0.5M10 15.5L15.5 10.5" fill="none" stroke="#000" stroke-width="1.4"/><path d="M2.5 2.5L7 3.8L3.8 7Z" fill="#000"/><path d="M13.5 13.5L9 12.2L12.2 9Z" fill="#000"/></svg>
<svg style="left:4px;top:157px" width="16" height="16" viewBox="0 0 16 16"><path d="M1.5 13C2 7 7 2.5 14 2" fill="none" stroke="#000" stroke-width="1.1"/><path d="M8 13C8 9 10.5 6.5 14 6" fill="none" stroke="#000" stroke-width="1.5"/><path d="M16 5.5L11.5 4V8Z" fill="#000"/><path d="M8 16L6 11.5H10.5Z" fill="#000"/><rect x="0" y="12.5" width="3" height="3" fill="#1787ea" stroke="#0a4ea6" stroke-width="0.6"/><rect x="13" y="0" width="3" height="3" fill="#1787ea" stroke="#0a4ea6" stroke-width="0.6"/></svg>
<svg style="left:4px;top:179px" width="16" height="16" viewBox="0 0 16 16"><text x="0" y="8.5" font-family="Liberation Sans, sans-serif" font-weight="bold" font-size="6" fill="#0a3f8f">Y</text><text x="3.5" y="4.5" font-family="Liberation Sans, sans-serif" font-weight="bold" font-size="5.5" fill="#0a3f8f">0</text><text x="12" y="4.5" font-family="Liberation Sans, sans-serif" font-weight="bold" font-size="6" fill="#0a3f8f">X</text><text x="0" y="15.5" font-family="Liberation Sans, sans-serif" font-weight="bold" font-size="5.5" fill="#0a3f8f">0</text><path d="M6.5 6.5V14M5 13.5H16M6.5 6.5L10.5 10.5L14.5 9M10.5 10.5V14M14.5 6V9H16" fill="none" stroke="#000" stroke-width="1.2"/><path d="M6.5 4.5L8.5 8H4.5Z" fill="#000"/></svg>
<div style="left:3px;top:200px;width:19px;height:1px;background:#a0a0a0;"></div>
<div style="left:3px;top:201px;width:19px;height:1px;background:#ffffff;"></div>
<svg style="left:4px;top:207px" width="16" height="16" viewBox="0 0 16 16"><circle cx="8" cy="8" r="7" fill="none" stroke="#000" stroke-width="1"/><path d="M9 9L4.5 4.5" fill="none" stroke="#000" stroke-width="1.4"/><path d="M3 3L7.5 4.5L4.5 7.5Z" fill="#000"/></svg>
<svg style="left:4px;top:229px" width="16" height="16" viewBox="0 0 16 16"><path d="M5 1.5C10 1.5 14.5 5 14 12" fill="none" stroke="#000" stroke-width="1"/><path d="M13 3L8.5 8H11.5L6 14.5" fill="none" stroke="#000" stroke-width="1.4"/><path d="M14.5 1L13.8 6L10 3Z" fill="#000"/></svg>
<svg style="left:4px;top:251px" width="16" height="16" viewBox="0 0 16 16"><circle cx="8" cy="8" r="7" fill="none" stroke="#000" stroke-width="1"/><path d="M4.5 4.5L11.5 11.5" fill="none" stroke="#000" stroke-width="1.4"/><path d="M2.8 2.8L7.3 4.3L4.3 7.3Z" fill="#000"/><path d="M13.2 13.2L8.7 11.7L11.7 8.7Z" fill="#000"/></svg>
<svg style="left:4px;top:273px" width="16" height="16" viewBox="0 0 16 16"><path d="M1 15.5H15.5M1 15.5L9 1.5" fill="none" stroke="#000" stroke-width="1.3"/><path d="M8.5 5C11.5 6.5 13.5 10 13.5 13" fill="none" stroke="#000" stroke-width="1"/><path d="M7 4L11 4.5L9 7.5Z" fill="#000"/><path d="M13.5 15.5L11.5 11.5H15.5Z" fill="#000"/></svg>
<div style="left:3px;top:294px;width:19px;height:1px;background:#a0a0a0;"></div>
<div style="left:3px;top:295px;width:19px;height:1px;background:#ffffff;"></div>
<svg style="left:4px;top:301px" width="16" height="16" viewBox="0 0 16 16"><path d="M0.5 1V16M15.5 1V16" fill="none" stroke="#000" stroke-width="1.2"/><path d="M1 5.5H15" fill="none" stroke="#000" stroke-width="1.3"/><path d="M15 5.5L11.5 3.5V7.5Z" fill="#000"/><path d="M1 5.5L4.5 3.5V7.5Z" fill="#000"/><path d="M4 1L9.5 3.5L8.5 6L12 7.5L11 9L14.5 14.5L6 8.5L7.5 7L3.5 4Z" fill="#e8d11c" stroke="#6a7a10" stroke-width="0.8"/></svg>
<svg style="left:4px;top:323px" width="16" height="16" viewBox="0 0 16 16"><path d="M0.5 0.5V16M9.5 7V16M15.5 0.5V7" fill="none" stroke="#000" stroke-width="1.1"/><path d="M1 3.5H15M1 11.5H9" fill="none" stroke="#000" stroke-width="1.1"/><path d="M1 3.5L4 2V5Z" fill="#000"/><path d="M15 3.5L12 2V5Z" fill="#000"/><path d="M1 11.5L4 10V13Z" fill="#000"/><path d="M9 11.5L6 10V13Z" fill="#000"/></svg>
<svg style="left:4px;top:345px" width="16" height="16" viewBox="0 0 16 16"><path d="M0.5 1V16M8.5 1V16M15.5 1V16" fill="none" stroke="#000" stroke-width="1.1"/><path d="M1 6.5H15" fill="none" stroke="#000" stroke-width="1.1"/><path d="M1 6.5L4 5V8Z" fill="#000"/><path d="M8 6.5L5 5V8Z" fill="#000"/><path d="M9 6.5L12 5V8Z" fill="#000"/><path d="M15 6.5L12 5V8Z" fill="#000"/></svg>
<div style="left:3px;top:366px;width:19px;height:1px;background:#a0a0a0;"></div>
<div style="left:3px;top:367px;width:19px;height:1px;background:#ffffff;"></div>
<svg style="left:4px;top:373px" width="16" height="16" viewBox="0 0 16 16"><path d="M6 1.5L11 3L9.5 5.5L12.5 8L11 9.5L14 15L7 9.5L8.5 8L5 5Z" fill="#e8d11c" stroke="#6a7a10" stroke-width="0.8"/><path d="M3 5L10 3" fill="none" stroke="#000" stroke-width="1.3"/><path d="M0 7.5L4 3.5L5 7Z" fill="#000"/><text x="11" y="6" font-family="Liberation Sans, sans-serif" font-weight="bold" font-size="7.5" fill="#0a3f8f">A</text></svg>
<svg style="left:4px;top:395px" width="16" height="16" viewBox="0 0 16 16"><rect x="0.5" y="2.5" width="15" height="11" fill="#dfe8f3" stroke="#1d4f8f" stroke-width="1"/><path d="M8.5 2.5V13.5" fill="none" stroke="#1d4f8f" stroke-width="1"/><circle cx="4.5" cy="8" r="2.3" fill="none" stroke="#1d4f8f" stroke-width="1"/><path d="M4.5 4.5V11.5M1.5 8H7.5" fill="none" stroke="#1d4f8f" stroke-width="0.9"/><rect x="10" y="10" width="1.5" height="1.5" fill="#0a2f6f"/><path d="M13 5V11.5M12 6L13 5" fill="none" stroke="#0a2f6f" stroke-width="1.3"/></svg>
<svg style="left:4px;top:417px" width="16" height="16" viewBox="0 0 16 16"><circle cx="8" cy="8" r="7" fill="#f7f7f7" stroke="#000" stroke-width="1"/><path d="M5 8H11M8 5V11" fill="none" stroke="#000" stroke-width="1.6"/></svg>
<div style="left:3px;top:438px;width:19px;height:1px;background:#a0a0a0;"></div>
<div style="left:3px;top:439px;width:19px;height:1px;background:#ffffff;"></div>
<svg style="left:4px;top:445px" width="16" height="16" viewBox="0 0 16 16"><path d="M0.5 10V16M15.5 10V16" fill="none" stroke="#000" stroke-width="1.1"/><path d="M1 13.5H15" fill="none" stroke="#000" stroke-width="1.2"/><path d="M1 13.5L4.5 11.5V15.5Z" fill="#000"/><path d="M15 13.5L11.5 11.5V15.5Z" fill="#000"/><text x="8" y="9.5" font-family="Liberation Sans, sans-serif" font-weight="bold" font-size="12" text-anchor="middle" fill="#0a3f8f">A</text></svg>
<svg style="left:4px;top:467px" width="16" height="16" viewBox="0 0 16 16"><path d="M0.5 10V16M15.5 10V16" fill="none" stroke="#000" stroke-width="1.1"/><path d="M1 13.5H15" fill="none" stroke="#000" stroke-width="1.2"/><path d="M1 13.5L4.5 11.5V15.5Z" fill="#000"/><path d="M15 13.5L11.5 11.5V15.5Z" fill="#000"/><path d="M7 11L13 2" fill="none" stroke="#d9b15a" stroke-width="3"/><path d="M12.2 3.2L13.5 1.2" fill="none" stroke="#e0706a" stroke-width="3"/><path d="M5.5 13L6.2 10L8.3 11.5Z" fill="#333"/></svg>
<svg style="left:4px;top:489px" width="16" height="16" viewBox="0 0 16 16"><path d="M1.5 1V15M13.5 1V15" fill="none" stroke="#000" stroke-width="1.1"/><path d="M2 4.5H13M2 11.5H13" fill="none" stroke="#000" stroke-width="1.1"/><path d="M4 2.5H11M3 4.5H12" fill="none" stroke="#3f78bf" stroke-width="1.2"/><path d="M2 4.5L5 3V6Z" fill="#000"/><path d="M13 4.5L10 3V6Z" fill="#000"/><path d="M2 11.5L5 10V13Z" fill="#000"/><path d="M13 11.5L10 10V13Z" fill="#000"/><path d="M0.5 1V5M14.5 1V5" fill="none" stroke="#3f78bf" stroke-width="1"/></svg>
<div style="left:3px;top:510px;width:19px;height:1px;background:#a0a0a0;"></div>
<div style="left:3px;top:511px;width:19px;height:1px;background:#ffffff;"></div>
<svg style="left:4px;top:517px" width="16" height="16" viewBox="0 0 16 16"><path d="M0.5 10V16M15.5 10V16" fill="none" stroke="#000" stroke-width="1.1"/><path d="M1 13.5H15" fill="none" stroke="#000" stroke-width="1.2"/><path d="M1 13.5L4.5 11.5V15.5Z" fill="#000"/><path d="M15 13.5L11.5 11.5V15.5Z" fill="#000"/><path d="M6 11L14 1" fill="none" stroke="#c98a45" stroke-width="2"/><path d="M2.5 12.5C4 9 6 8 8.5 9.5L6.5 12Z" fill="#222"/></svg>
<div style="left:26px;top:100px;width:25px;height:1px;background:#ffffff;"></div>
<div style="left:26px;top:100px;width:1px;height:434px;background:#ffffff;"></div>
<div style="left:26px;top:533px;width:25px;height:1px;background:#a0a0a0;"></div>
<div style="left:50px;top:100px;width:1px;height:434px;background:#a0a0a0;"></div>
<div style="left:29px;top:101px;width:20px;height:1px;background:#ffffff;"></div>
<div style="left:29px;top:103px;width:20px;height:1px;background:#a0a0a0;"></div>
<div style="left:48px;top:101px;width:1px;height:3px;background:#a0a0a0;"></div>
<div style="left:29px;top:101px;width:1px;height:2px;background:#ffffff;"></div>
<div style="left:29px;top:105px;width:20px;height:1px;background:#ffffff;"></div>
<div style="left:29px;top:107px;width:20px;height:1px;background:#a0a0a0;"></div>
<div style="left:48px;top:105px;width:1px;height:3px;background:#a0a0a0;"></div>
<div style="left:29px;top:105px;width:1px;height:2px;background:#ffffff;"></div>
<svg style="left:30px;top:113px" width="16" height="16" viewBox="0 0 16 16"><path d="M2.5 13.5L13.5 2.5" fill="none" stroke="#000" stroke-width="1.3"/><rect x="1" y="12" width="3" height="3" fill="#1787ea" stroke="#0a4ea6" stroke-width="0.6"/><rect x="12" y="1" width="3" height="3" fill="#1787ea" stroke="#0a4ea6" stroke-width="0.6"/></svg>
<svg style="left:30px;top:135px" width="16" height="16" viewBox="0 0 16 16"><path d="M3 13L13.5 2.5" fill="none" stroke="#000" stroke-width="1.3"/><path d="M0.5 15.5L2 10.5L5.5 14Z" fill="#000"/><path d="M15.5 0.5L14 5.5L10.5 2Z" fill="#000"/><rect x="6.5" y="6.5" width="3" height="3" fill="#1787ea" stroke="#0a4ea6" stroke-width="0.6"/></svg>
<svg style="left:30px;top:157px" width="16" height="16" viewBox="0 0 16 16"><path d="M2 11.5H11" fill="none" stroke="#000" stroke-width="1.3"/><path d="M11.5 3.5C17.5 3.5 17.5 11.5 11.5 11.5" fill="none" stroke="#000" stroke-width="1.1"/><rect x="0.5" y="10" width="3" height="3" fill="#1787ea" stroke="#0a4ea6" stroke-width="0.6"/><rect x="9.5" y="10" width="3" height="3" fill="#1787ea" stroke="#0a4ea6" stroke-width="0.6"/><rect x="9.5" y="2" width="3" height="3" fill="#1787ea" stroke="#0a4ea6" stroke-width="0.6"/></svg>
<svg style="left:30px;top:179px" width="16" height="16" viewBox="0 0 16 16"><defs><linearGradient id="gpg" x1="0" y1="0" x2="1" y2="1"><stop offset="0" stop-color="#eef3f9"/><stop offset="1" stop-color="#b9cde3"/></linearGradient></defs><path d="M8 1.8L14.4 6.6L12 14H4L1.6 6.6Z" fill="url(#gpg)" stroke="#000" stroke-width="1.3" stroke-linejoin="round"/></svg>
<svg style="left:30px;top:201px" width="16" height="16" viewBox="0 0 16 16"><defs><linearGradient id="grc" x1="0" y1="0" x2="1" y2="1"><stop offset="0" stop-color="#eef3f9"/><stop offset="1" stop-color="#b9cde3"/></linearGradient></defs><path d="M1.5 4.5H14.5V12.5H1.5Z" fill="url(#grc)" stroke="#000" stroke-width="1.3"/><rect x="0" y="11" width="3" height="3" fill="#1787ea" stroke="#0a4ea6" stroke-width="0.6"/><rect x="13" y="3" width="3" height="3" fill="#1787ea" stroke="#0a4ea6" stroke-width="0.6"/></svg>
<svg style="left:30px;top:223px" width="16" height="16" viewBox="0 0 16 16"><path d="M1.5 14.5C2 9 7 3 14.5 1.5" fill="none" stroke="#000" stroke-width="1.3"/><rect x="0.2" y="13" width="3" height="3" fill="#1787ea" stroke="#0a4ea6" stroke-width="0.6"/><rect x="4" y="4" width="3" height="3" fill="#1787ea" stroke="#0a4ea6" stroke-width="0.6"/><rect x="13" y="0" width="3" height="3" fill="#1787ea" stroke="#0a4ea6" stroke-width="0.6"/></svg>
<svg style="left:30px;top:245px" width="16" height="16" viewBox="0 0 16 16"><defs><linearGradient id="gci" x1="0" y1="0" x2="1" y2="1"><stop offset="0" stop-color="#f2f6fa"/><stop offset="1" stop-color="#b9cde3"/></linearGradient></defs><circle cx="8" cy="8" r="6.8" fill="url(#gci)" stroke="#000" stroke-width="1.4"/><path d="M8 8L12 4" fill="none" stroke="#0a4ea6" stroke-width="1"/><rect x="6.5" y="6.5" width="3" height="3" fill="#1787ea" stroke="#0a4ea6" stroke-width="0.6"/></svg>
<svg style="left:30px;top:267px" width="16" height="16" viewBox="0 0 16 16"><defs><linearGradient id="grv" x1="0" y1="0" x2="1" y2="1"><stop offset="0" stop-color="#f2f6fa"/><stop offset="1" stop-color="#b9cde3"/></linearGradient></defs><path d="M5 2.2C7 0.8 9.5 2 9.3 4.5C12 3.5 14.5 5.5 14 8C15.8 10 14.5 13.5 11.5 13.5C10.5 15.5 7 15.5 6 13C3 13.5 1.2 10 3.5 8C0.8 6.5 1.5 2 5 2.2Z" fill="url(#grv)" stroke="#000" stroke-width="1.3"/></svg>
<svg style="left:30px;top:289px" width="16" height="16" viewBox="0 0 16 16"><path d="M1 13C4 13 4 5 7 5S10 9 12 8S14 2 15.5 1" fill="none" stroke="#000" stroke-width="1.2"/></svg>
<svg style="left:30px;top:311px" width="16" height="16" viewBox="0 0 16 16"><defs><linearGradient id="gel" x1="0" y1="0" x2="1" y2="1"><stop offset="0" stop-color="#f2f6fa"/><stop offset="1" stop-color="#b9cde3"/></linearGradient></defs><ellipse cx="8" cy="8.5" rx="6.5" ry="4" fill="url(#gel)" stroke="#000" stroke-width="1.4"/><rect x="0.5" y="7" width="3" height="3" fill="#1787ea" stroke="#0a4ea6" stroke-width="0.6"/><rect x="12.5" y="7" width="3" height="3" fill="#1787ea" stroke="#0a4ea6" stroke-width="0.6"/><rect x="6.5" y="3.2" width="3" height="3" fill="#1787ea" stroke="#0a4ea6" stroke-width="0.6"/></svg>
<svg style="left:30px;top:333px" width="16" height="16" viewBox="0 0 16 16"><defs><linearGradient id="gea" x1="0" y1="0" x2="1" y2="1"><stop offset="0" stop-color="#f2f6fa"/><stop offset="1" stop-color="#b9cde3"/></linearGradient></defs><path d="M2 9C2 3 14.5 3 14.5 8C14.5 11 11 12.5 8.5 12.3" fill="url(#gea)" stroke="#000" stroke-width="1.3"/><rect x="0.5" y="7.5" width="3" height="3" fill="#1787ea" stroke="#0a4ea6" stroke-width="0.6"/><rect x="6.5" y="11" width="3" height="3" fill="#1787ea" stroke="#0a4ea6" stroke-width="0.6"/></svg>
<svg style="left:30px;top:355px" width="16" height="16" viewBox="0 0 16 16"><path d="M5.5 0.5H12L15.5 4V12.5H5.5Z" fill="#eef3fa" stroke="#7f9fc8" stroke-width="1"/><path d="M12 0.5V4H15.5" fill="none" stroke="#7f9fc8" stroke-width="1"/><rect x="2" y="4.5" width="7.5" height="6" fill="#f3e36a" stroke="#1d4f8f" stroke-width="1"/><circle cx="9" cy="11" r="3.3" fill="#f3e36a" stroke="#1d4f8f" stroke-width="1"/><rect x="0.5" y="8.5" width="2.6" height="2.6" fill="#1787ea" stroke="#0a4ea6" stroke-width="0.6"/><path d="M16 12V16H12Z" fill="#000"/></svg>
<svg style="left:30px;top:377px" width="16" height="16" viewBox="0 0 16 16"><rect x="2.5" y="3" width="8" height="6.5" fill="#f3e36a" stroke="#1d4f8f" stroke-width="1"/><circle cx="10" cy="10.5" r="3.6" fill="#f3e36a" stroke="#1d4f8f" stroke-width="1"/><rect x="1" y="7.5" width="2.6" height="2.6" fill="#1787ea" stroke="#0a4ea6" stroke-width="0.6"/></svg>
<svg style="left:30px;top:399px" width="16" height="16" viewBox="0 0 16 16"><rect x="7" y="7" width="2.6" height="2.6" fill="#1787ea" stroke="#0a4ea6" stroke-width="0.6"/></svg>
<svg style="left:30px;top:421px" width="16" height="16" viewBox="0 0 16 16"><rect x="3.5" y="3.5" width="9" height="9" fill="#fff"/><path d="M4 6.5L9.5 12M4 4L12 12M6.5 4L12 9.5M9 4L12 7M4 9L7 12" fill="none" stroke="#3a6fae" stroke-width="1"/><path d="M0 3.5H16M0 12.5H16M3.5 0V16M12.5 0V16" fill="none" stroke="#2e5f9e" stroke-width="1.4"/><path d="M5 16L7 14M12.5 12.5L16 8" fill="none" stroke="#2e5f9e" stroke-width="1"/></svg>
<svg style="left:30px;top:443px" width="16" height="16" viewBox="0 0 16 16"><defs><linearGradient id="ggr" x1="0" y1="0" x2="1" y2="1"><stop offset="0" stop-color="#2a3a8a"/><stop offset="1" stop-color="#c8c050"/></linearGradient></defs><rect x="3.5" y="3.5" width="9" height="9" fill="url(#ggr)"/><path d="M0 3.5H16M0 12.5H16M3.5 0V16M12.5 0V16" fill="none" stroke="#0a1030" stroke-width="1.5"/><path d="M5 16L7 14M9 13L16 5" fill="none" stroke="#0a1030" stroke-width="1"/><path d="M12 12.5H10L12 10Z" fill="#f0f0f0"/></svg>
<svg style="left:30px;top:465px" width="16" height="16" viewBox="0 0 16 16"><defs><linearGradient id="grg" x1="0" y1="0" x2="1" y2="1"><stop offset="0" stop-color="#f4f7fb"/><stop offset="1" stop-color="#a9c0dc"/></linearGradient></defs><path d="M1.5 2.5H10L15.5 7.5V14.5H1.5Z" fill="url(#grg)" stroke="#1d4f8f" stroke-width="1.2"/><circle cx="8" cy="9" r="3" fill="#f4f7fb" stroke="#1d4f8f" stroke-width="1.2"/></svg>
<svg style="left:30px;top:487px" width="16" height="16" viewBox="0 0 16 16"><rect x="1" y="2" width="14" height="12" fill="#4a7ec4"/><rect x="1" y="2" width="14" height="3" fill="#2f62ad"/><rect x="2" y="5.6" width="3.4" height="2" fill="#e9f0fa"/><rect x="6.4" y="5.6" width="3.4" height="2" fill="#e9f0fa"/><rect x="10.8" y="5.6" width="3.4" height="2" fill="#e9f0fa"/><rect x="2" y="8.4" width="3.4" height="2" fill="#e9f0fa"/><rect x="6.4" y="8.4" width="3.4" height="2" fill="#e9f0fa"/><rect x="10.8" y="8.4" width="3.4" height="2" fill="#e9f0fa"/><rect x="2" y="11.2" width="3.4" height="2" fill="#e9f0fa"/><rect x="6.4" y="11.2" width="3.4" height="2" fill="#e9f0fa"/><rect x="10.8" y="11.2" width="3.4" height="2" fill="#e9f0fa"/></svg>
<svg style="left:30px;top:509px" width="16" height="16" viewBox="0 0 16 16"><text x="8.3" y="14" font-family="Liberation Sans, sans-serif" font-size="18" text-anchor="middle" fill="#000">A</text></svg>
<!-- drawing area -->
<div style="left:52px;top:99px;width:1288px;height:1px;background:#a0a0a0;"></div>
<div style="left:53px;top:100px;width:1286px;height:1px;background:#696969;"></div>
<div style="left:52px;top:99px;width:1px;height:545px;background:#a0a0a0;"></div>
<div style="left:53px;top:100px;width:1px;height:543px;background:#696969;"></div>
<div style="left:1338px;top:101px;width:1px;height:543px;background:#ffffff;"></div>
<div style="left:54px;top:643px;width:1286px;height:1px;background:#ffffff;"></div>
<div id="draw" style="left:54px;top:101px;width:1284px;height:525px">
<div style="left:565px;top:-41px;width:188px;height:67px;background:linear-gradient(100deg,#ffa44e,#ffa957);border:1px solid #000;"></div>
<div style="left:640px;top:11px;width:46px;height:1px;background:#000;"></div>
<div style="left:634px;top:0px;width:2px;height:1px;background:#000;"></div>
<div style="left:685px;top:0px;width:1px;height:1px;background:#000;"></div>
<div style="left:568px;top:64px;width:187px;height:94px;background:linear-gradient(100deg,#ffa44e,#ffa957);border:1px solid #000;"></div>
<div style="left:571px;top:214px;width:188px;height:95px;background:linear-gradient(100deg,#4cbbd8,#5dc4db);border:1px solid #000;"></div>
<div style="left:607px;top:225px;width:3px;height:29px;background:#fff;"></div>
<div style="left:615px;top:225px;width:3px;height:29px;background:#fff;"></div>
<div style="left:697px;top:221px;width:3px;height:29px;background:#fff;"></div>
<div style="left:705px;top:221px;width:3px;height:29px;background:#fff;"></div>
<div style="left:652px;top:263px;width:3px;height:29px;background:#fff;"></div>
<div style="left:660px;top:263px;width:3px;height:29px;background:#fff;"></div>
<span class="tx f-serif" style="left:825px;top:80px;height:58px;line-height:58px;font-size:47px;transform:scaleX(0.9872);transform-origin:0 0;word-spacing:-1px;">Мелкосопочные. Злаков</span>
<span class="tx f-serif" style="left:841px;top:202px;height:58px;line-height:58px;font-size:47px;transform:scaleX(0.9872);transform-origin:0 0;letter-spacing:-0.3px;">Растителность долин р</span>
<span class="tx f-serif" style="left:842px;top:255px;height:58px;line-height:58px;font-size:47px;transform:scaleX(0.9872);transform-origin:0 0;letter-spacing:-0.1px;">водохранилищ.Кустарн</span>
<span class="tx f-serif" style="left:854px;top:308px;height:58px;line-height:58px;font-size:47px;transform:scaleX(0.9872);transform-origin:0 0;letter-spacing:-0.33px;">и тростниковые зарос.</span>
<div style="left:1219px;top:175px;width:65px;height:1px;background:#000;"></div>
<div style="left:1253px;top:142px;width:1px;height:68px;background:#000;"></div>
<div style="left:1250px;top:172px;width:7px;height:7px;border:1px solid #000;"></div>
<svg style="left:0px;top:424px" width="100" height="95" viewBox="0 0 100 95"><path d="M15.5 34V84.5H66" fill="none" stroke="#000" stroke-width="1"/><path d="M15.5 22L10.5 33.5H20.5Z" fill="#fff" stroke="#000" stroke-width="0.9"/><path d="M15.5 23L13.5 33M15.5 23L17.5 33M15.5 23V33" fill="none" stroke="#999" stroke-width="0.6"/><path d="M78 84.5L66.5 79.5V89.5Z" fill="#fff" stroke="#000" stroke-width="0.9"/><path d="M77 84.5L67 82.5M77 84.5L67 86.5M77 84.5H67" fill="none" stroke="#999" stroke-width="0.6"/><path d="M12.5 1.5L17.5 8L22.5 1.5M17.5 8V14" fill="none" stroke="#000" stroke-width="0.9"/><path d="M87.5 80L97.5 91.5M97.5 80L87.5 91.5" fill="none" stroke="#000" stroke-width="0.9"/></svg>
</div>
<div style="left:54px;top:626px;width:1284px;height:1px;background:#000;"></div>
<div style="left:54px;top:627px;width:1284px;height:16px;background:#f0f0f0;"></div>
<div style="left:71px;top:627px;width:1px;height:15px;background:#a0a0a0;"></div>
<div style="left:54px;top:627px;width:1px;height:15px;background:#ffffff;"></div>
<div style="left:89px;top:627px;width:1px;height:15px;background:#a0a0a0;"></div>
<div style="left:72px;top:627px;width:1px;height:15px;background:#ffffff;"></div>
<div style="left:107px;top:627px;width:1px;height:15px;background:#a0a0a0;"></div>
<div style="left:90px;top:627px;width:1px;height:15px;background:#ffffff;"></div>
<div style="left:125px;top:627px;width:1px;height:15px;background:#a0a0a0;"></div>
<div style="left:108px;top:627px;width:1px;height:15px;background:#ffffff;"></div>
<div style="left:54px;top:641px;width:72px;height:1px;background:#a0a0a0;"></div>
<svg style="left:55px;top:629px" width="16" height="11" viewBox="0 0 16 11"><rect x="3" y="1" width="1.6" height="9" fill="#000"/><path d="M11 1V10L5 5.5Z" fill="#000"/></svg>
<svg style="left:73px;top:629px" width="16" height="11" viewBox="0 0 16 11"><path d="M10 1V10L4 5.5Z" fill="#000"/></svg>
<svg style="left:91px;top:629px" width="16" height="11" viewBox="0 0 16 11"><path d="M5 1V10L11 5.5Z" fill="#000"/></svg>
<svg style="left:109px;top:629px" width="16" height="11" viewBox="0 0 16 11"><rect x="10.4" y="1" width="1.6" height="9" fill="#000"/><path d="M4 1V10L10 5.5Z" fill="#000"/></svg>
<svg style="left:129px;top:627px" width="142" height="16" viewBox="0 0 142 16"><path d="M0.5 -1L4.5 14.5H51L55 -1Z" fill="#fff"/><path d="M0.5 0L4.5 14.5H51.5L55 0" fill="none" stroke="#000" stroke-width="1.3"/><path d="M53 7.5L55.5 14.5H94.5L98 0" fill="none" stroke="#000" stroke-width="1.3"/><path d="M96 7.5L98.5 14.5H137.5L141 0" fill="none" stroke="#000" stroke-width="1.3"/></svg>
<span class="tx" style="left:137px;top:626px;height:16px;line-height:16px;font-size:11px;transform:scaleX(0.9751);transform-origin:0 0;">Модель</span>
<span class="tx" style="left:188px;top:626px;height:16px;line-height:16px;font-size:11px;transform:scaleX(0.9993);transform-origin:0 0;">Лист1</span>
<span class="tx" style="left:231px;top:626px;height:16px;line-height:16px;font-size:11px;transform:scaleX(1.0327);transform-origin:0 0;">Лист2</span>
<!-- modify + draw order toolbars -->
<div style="left:1340px;top:100px;width:26px;height:1px;background:#ffffff;"></div>
<div style="left:1340px;top:100px;width:1px;height:390px;background:#ffffff;"></div>
<div style="left:1340px;top:489px;width:26px;height:1px;background:#a0a0a0;"></div>
<div style="left:1365px;top:100px;width:1px;height:390px;background:#a0a0a0;"></div>
<div style="left:1343px;top:101px;width:21px;height:1px;background:#ffffff;"></div>
<div style="left:1343px;top:103px;width:21px;height:1px;background:#a0a0a0;"></div>
<div style="left:1363px;top:101px;width:1px;height:3px;background:#a0a0a0;"></div>
<div style="left:1343px;top:101px;width:1px;height:2px;background:#ffffff;"></div>
<div style="left:1343px;top:105px;width:21px;height:1px;background:#ffffff;"></div>
<div style="left:1343px;top:107px;width:21px;height:1px;background:#a0a0a0;"></div>
<div style="left:1363px;top:105px;width:1px;height:3px;background:#a0a0a0;"></div>
<div style="left:1343px;top:105px;width:1px;height:2px;background:#ffffff;"></div>
<svg style="left:1345px;top:113px" width="16" height="16" viewBox="0 0 16 16"><path d="M0.5 14.5H16" fill="none" stroke="#000" stroke-width="1"/><g transform="rotate(-45 8 8)"><rect x="-1" y="5" width="7" height="5.5" rx="2" fill="#e2574c" stroke="#7c2a22" stroke-width="0.6"/><rect x="4.5" y="5" width="3" height="5.5" fill="#f4f4f4" stroke="#3b5f8f" stroke-width="0.5"/><rect x="7.5" y="5" width="2" height="5.5" fill="#43b7c0"/><rect x="9.5" y="5" width="8" height="5.5" fill="#e9b715" stroke="#3b5f8f" stroke-width="0.5"/></g></svg>
<svg style="left:1345px;top:135px" width="16" height="16" viewBox="0 0 16 16"><defs><linearGradient id="gco" x1="0" y1="0" x2="1" y2="1"><stop offset="0" stop-color="#f4f7fb"/><stop offset="1" stop-color="#b4c9e0"/></linearGradient></defs><circle cx="3.8" cy="4" r="3" fill="url(#gco)" stroke="#000" stroke-width="1.2"/><circle cx="12.5" cy="12.3" r="3.2" fill="url(#gco)" stroke="#000" stroke-width="1.2"/><circle cx="9.8" cy="10.3" r="3.2" fill="url(#gco)" stroke="#000" stroke-width="1.2"/><path d="M5.5 2.2C8.5 -0.5 12.5 1 13 4.5" fill="none" stroke="#0b3f7d" stroke-width="2"/><path d="M10 4.5H16L13 8Z" fill="#0b3f7d"/></svg>
<svg style="left:1345px;top:157px" width="16" height="16" viewBox="0 0 16 16"><defs><linearGradient id="gmi" x1="0" y1="0" x2="1" y2="1"><stop offset="0" stop-color="#f4f7fb"/><stop offset="1" stop-color="#b4c9e0"/></linearGradient></defs><path d="M5.8 3V12H1Z" fill="url(#gmi)" stroke="#000" stroke-width="1.2"/><path d="M9.2 3V12H14.5Z" fill="url(#gmi)" stroke="#000" stroke-width="1.2"/><path d="M7.5 0V16" fill="none" stroke="#1268d8" stroke-width="1.2"/></svg>
<svg style="left:1345px;top:179px" width="16" height="16" viewBox="0 0 16 16"><path d="M16 13.5H4.5C-1 13.5 0.5 8 4.5 8C4.5 1.5 12.5 1.5 12.5 8" fill="none" stroke="#000" stroke-width="1.3"/><path d="M16 11.5H5.5C2 11.5 3 9.5 7.5 9.8V6H10V9.5H16" fill="none" stroke="#1268d8" stroke-width="1.1"/></svg>
<svg style="left:1345px;top:201px" width="16" height="16" viewBox="0 0 16 16"><defs><linearGradient id="gar" x1="0" y1="0" x2="1" y2="1"><stop offset="0" stop-color="#f4f7fb"/><stop offset="1" stop-color="#b4c9e0"/></linearGradient></defs><rect x="0.6" y="0.6" width="6" height="6" fill="url(#gar)" stroke="#000" stroke-width="1.2"/><rect x="0.6" y="9.6" width="6" height="6" fill="url(#gar)" stroke="#000" stroke-width="1.2"/><rect x="9.6" y="0.6" width="6" height="6" fill="url(#gar)" stroke="#000" stroke-width="1.2"/><rect x="9.6" y="9.6" width="6" height="6" fill="url(#gar)" stroke="#000" stroke-width="1.2"/></svg>
<svg style="left:1345px;top:223px" width="16" height="16" viewBox="0 0 16 16"><path d="M8 2.5V13.5M2.5 8H13.5" fill="none" stroke="#3c6ea6" stroke-width="2"/><path d="M8 0L11.5 4H4.5Z" fill="#3c6ea6"/><path d="M8 16L11.5 12H4.5Z" fill="#3c6ea6"/><path d="M0 8L4 4.5V11.5Z" fill="#3c6ea6"/><path d="M16 8L12 4.5V11.5Z" fill="#3c6ea6"/></svg>
<svg style="left:1345px;top:245px" width="16" height="16" viewBox="0 0 16 16"><path d="M5.5 3.5A6.3 6.3 0 1 0 11 3.2" fill="none" stroke="#3c6ea6" stroke-width="2"/><path d="M1 2.5L6.5 0.5L6 6.5Z" fill="#3c6ea6"/></svg>
<svg style="left:1345px;top:267px" width="16" height="16" viewBox="0 0 16 16"><defs><linearGradient id="gsc" x1="0" y1="0" x2="1" y2="1"><stop offset="0" stop-color="#f4f7fb"/><stop offset="1" stop-color="#b4c9e0"/></linearGradient></defs><path d="M0.5 6V0.5H15.5V15.5H10" fill="none" stroke="#3c6ea6" stroke-width="1.2"/><path d="M1 1H15V15H9.5V7H1Z" fill="url(#gsc)"/><rect x="0.6" y="7.5" width="8" height="8" fill="none" stroke="#000" stroke-width="1.2" stroke-dasharray="1.2 1.2"/></svg>
<svg style="left:1345px;top:289px" width="16" height="16" viewBox="0 0 16 16"><defs><linearGradient id="gst" x1="0" y1="0" x2="1" y2="1"><stop offset="0" stop-color="#f4f7fb"/><stop offset="1" stop-color="#b4c9e0"/></linearGradient></defs><path d="M1 1H5.5V15H1Z" fill="url(#gst)"/><path d="M6 0.6H0.6V15.4H6" fill="none" stroke="#000" stroke-width="1.3"/><path d="M6 1V15" fill="none" stroke="#000" stroke-width="1.2" stroke-dasharray="1.2 1.2"/><path d="M8 0.5L15.5 15.5H7.5" fill="url(#gst)" stroke="#3c6ea6" stroke-width="1.2"/></svg>
<svg style="left:1345px;top:311px" width="16" height="16" viewBox="0 0 16 16"><path d="M0 6.5H5" fill="none" stroke="#000" stroke-width="1.4"/><path d="M7 6.5H16" fill="none" stroke="#1268d8" stroke-width="1.2" stroke-dasharray="2 1.2"/><path d="M4 12L8 4" fill="none" stroke="#1268d8" stroke-width="1.3"/></svg>
<svg style="left:1345px;top:333px" width="16" height="16" viewBox="0 0 16 16"><path d="M0 7.5H5" fill="none" stroke="#000" stroke-width="1.4"/><path d="M6.5 7.5H11.5" fill="none" stroke="#1268d8" stroke-width="1.2" stroke-dasharray="2 1.2"/><path d="M10.5 13L15.5 2.5" fill="none" stroke="#1268d8" stroke-width="1.3"/></svg>
<svg style="left:1345px;top:355px" width="16" height="16" viewBox="0 0 16 16"><defs><linearGradient id="gbp" x1="0" y1="0" x2="1" y2="1"><stop offset="0" stop-color="#f4f7fb"/><stop offset="1" stop-color="#b4c9e0"/></linearGradient></defs><rect x="0.7" y="2.7" width="14.6" height="10.6" fill="url(#gbp)" stroke="#000" stroke-width="1.3"/><rect x="9" y="1.2" width="3" height="3" fill="#3c6ea6"/></svg>
<svg style="left:1345px;top:377px" width="16" height="16" viewBox="0 0 16 16"><defs><linearGradient id="gbk" x1="0" y1="0" x2="1" y2="1"><stop offset="0" stop-color="#f4f7fb"/><stop offset="1" stop-color="#b4c9e0"/></linearGradient></defs><rect x="1" y="3" width="14" height="10" fill="url(#gbk)"/><path d="M3 2.7H0.7V13.3H15.3V2.7H13" fill="none" stroke="#000" stroke-width="1.3"/><rect x="2.5" y="1.2" width="3" height="3" fill="#3c6ea6"/><rect x="11" y="1.2" width="3" height="3" fill="#3c6ea6"/></svg>
<svg style="left:1345px;top:399px" width="16" height="16" viewBox="0 0 16 16"><path d="M0 8.5H16" fill="none" stroke="#000" stroke-width="1.6"/><path d="M4 4.5L8 8.5L4 12.5Z" fill="#2f5a8c"/><path d="M12 4.5L8 8.5L12 12.5Z" fill="#2f5a8c"/></svg>
<svg style="left:1345px;top:421px" width="16" height="16" viewBox="0 0 16 16"><path d="M1 0.6H9" fill="none" stroke="#000" stroke-width="1.2" stroke-dasharray="1.2 1.2"/><path d="M0.6 1V9" fill="none" stroke="#000" stroke-width="1.2" stroke-dasharray="1.2 1.2"/><path d="M8.5 0.6H16M0.6 9V16" fill="none" stroke="#000" stroke-width="1.3"/><path d="M1 8.5L9 1" fill="none" stroke="#1268d8" stroke-width="1.4"/></svg>
<svg style="left:1345px;top:443px" width="16" height="16" viewBox="0 0 16 16"><path d="M1 0.6H9" fill="none" stroke="#000" stroke-width="1.2" stroke-dasharray="1.2 1.2"/><path d="M0.6 1V9" fill="none" stroke="#000" stroke-width="1.2" stroke-dasharray="1.2 1.2"/><path d="M9.5 0.6H16M0.6 10V16" fill="none" stroke="#000" stroke-width="1.3"/><path d="M1 10C1 4.5 5 1.5 10 1.2" fill="none" stroke="#1268d8" stroke-width="1.5"/></svg>
<svg style="left:1345px;top:465px" width="16" height="16" viewBox="0 0 16 16"><g transform="rotate(-40 5 11)"><rect x="0.5" y="9" width="9" height="4" rx="1" fill="#e01818" stroke="#7a0a0a" stroke-width="0.5"/></g><path d="M9.5 6.5L13 3" fill="none" stroke="#000" stroke-width="1.2"/><path d="M4 2.5L6 6L2 5.5ZM9.5 9L12 9.5L10 12ZM6 13L8 15L5 15.5Z" fill="#f0c010" stroke="none" stroke-width="0"/><path d="M1 4L2 5M1 8H2.5M9 13.5L10 14.5M10 10.5H11" fill="none" stroke="#c01010" stroke-width="1"/><path d="M12.5 1.5L13.5 0.5M14.5 3.5L15.5 2.5M14.5 5.5H15.5M11 0.5V1.5" fill="none" stroke="#6a9ad0" stroke-width="0.9"/></svg>
<div style="left:1340px;top:491px;width:26px;height:1px;background:#ffffff;"></div>
<div style="left:1340px;top:491px;width:1px;height:105px;background:#ffffff;"></div>
<div style="left:1340px;top:595px;width:26px;height:1px;background:#a0a0a0;"></div>
<div style="left:1365px;top:491px;width:1px;height:105px;background:#a0a0a0;"></div>
<div style="left:1343px;top:493px;width:21px;height:1px;background:#ffffff;"></div>
<div style="left:1343px;top:495px;width:21px;height:1px;background:#a0a0a0;"></div>
<div style="left:1363px;top:493px;width:1px;height:3px;background:#a0a0a0;"></div>
<div style="left:1343px;top:493px;width:1px;height:2px;background:#ffffff;"></div>
<div style="left:1343px;top:497px;width:21px;height:1px;background:#ffffff;"></div>
<div style="left:1343px;top:499px;width:21px;height:1px;background:#a0a0a0;"></div>
<div style="left:1363px;top:497px;width:1px;height:3px;background:#a0a0a0;"></div>
<div style="left:1343px;top:497px;width:1px;height:2px;background:#ffffff;"></div>
<svg style="left:1345px;top:505px" width="16" height="16" viewBox="0 0 16 16"><defs><linearGradient id="gf1" x1="0" y1="0" x2="1" y2="1"><stop offset="0" stop-color="#ffffff"/><stop offset="1" stop-color="#c3d6e4"/></linearGradient></defs><rect x="0.5" y="0.5" width="8" height="6" fill="url(#gf1)" stroke="#5d8abb" stroke-width="1"/><defs><linearGradient id="gf2" x1="0" y1="0" x2="1" y2="1"><stop offset="0" stop-color="#ffffff"/><stop offset="1" stop-color="#c3d6e4"/></linearGradient></defs><rect x="7.5" y="9.5" width="8" height="6" fill="url(#gf2)" stroke="#5d8abb" stroke-width="1"/><rect x="3.6" y="3.6" width="9" height="9" fill="#5a86b7" fill-opacity="1" stroke="#2c5d96" stroke-width="1.2"/></svg>
<svg style="left:1345px;top:527px" width="16" height="16" viewBox="0 0 16 16"><rect x="3.6" y="3.6" width="9" height="9" fill="#5a86b7" fill-opacity="1" stroke="#2c5d96" stroke-width="1.2"/><defs><linearGradient id="gb1" x1="0" y1="0" x2="1" y2="1"><stop offset="0" stop-color="#ffffff"/><stop offset="1" stop-color="#c3d6e4"/></linearGradient></defs><rect x="0.5" y="0.5" width="8" height="6" fill="url(#gb1)" stroke="#5d8abb" stroke-width="1"/><defs><linearGradient id="gb2" x1="0" y1="0" x2="1" y2="1"><stop offset="0" stop-color="#ffffff"/><stop offset="1" stop-color="#c3d6e4"/></linearGradient></defs><rect x="7.5" y="9.5" width="8" height="6" fill="url(#gb2)" stroke="#5d8abb" stroke-width="1"/></svg>
<svg style="left:1345px;top:549px" width="16" height="16" viewBox="0 0 16 16"><defs><linearGradient id="ga1" x1="0" y1="0" x2="1" y2="1"><stop offset="0" stop-color="#ffffff"/><stop offset="1" stop-color="#c3d6e4"/></linearGradient></defs><rect x="4.5" y="4.5" width="11" height="9" fill="url(#ga1)" stroke="#5d8abb" stroke-width="1"/><rect x="1.6" y="0.6" width="11" height="9" fill="#5a86b7" fill-opacity="0.92" stroke="#2c5d96" stroke-width="1.2"/></svg>
<svg style="left:1345px;top:571px" width="16" height="16" viewBox="0 0 16 16"><rect x="1.6" y="0.6" width="11" height="9" fill="#5a86b7" fill-opacity="1" stroke="#2c5d96" stroke-width="1.2"/><defs><linearGradient id="gu1" x1="0" y1="0" x2="1" y2="1"><stop offset="0" stop-color="#ffffff"/><stop offset="1" stop-color="#c3d6e4"/></linearGradient></defs><rect x="4.5" y="4.5" width="11" height="9" fill="url(#gu1)" stroke="#5d8abb" stroke-width="1"/></svg>
<!-- command window -->
<div style="left:0px;top:645px;width:1366px;height:2px;background:#fafafa;"></div>
<div style="left:0px;top:647px;width:1366px;height:1px;background:#fff;"></div>
<div style="left:0px;top:648px;width:1366px;height:2px;background:#696969;"></div>
<div style="left:6px;top:659px;width:2px;height:44px;background:#ffffff;"></div>
<div style="left:8px;top:660px;width:1px;height:44px;background:#a0a0a0;"></div>
<div style="left:6px;top:703px;width:3px;height:1px;background:#a0a0a0;"></div>
<div style="left:10px;top:659px;width:2px;height:44px;background:#ffffff;"></div>
<div style="left:12px;top:660px;width:1px;height:44px;background:#a0a0a0;"></div>
<div style="left:10px;top:703px;width:3px;height:1px;background:#a0a0a0;"></div>
<div style="left:17px;top:659px;width:1342px;height:45px;background:#fff;border-top:2px solid #808080;border-left:2px solid #808080;"></div>
<div style="left:19px;top:683px;width:1339px;height:1px;background:#a0a0a0;"></div>
<div style="left:1342px;top:661px;width:16px;height:22px;background:#f0f0f0;"></div>
<svg style="left:1346px;top:665px" width="9" height="6" viewBox="0 0 9 6"><path d="M1 5L4.5 1.5L8 5" fill="none" stroke="#505050" stroke-width="1.5"/></svg>
<svg style="left:1346px;top:675px" width="9" height="6" viewBox="0 0 9 6"><path d="M1 1 L4.5 5 L8 1" fill="none" stroke="#505050" stroke-width="1.5"/></svg>
<div style="left:1272px;top:685px;width:69px;height:18px;background:#f0f0f0;"></div>
<div style="left:1291px;top:685px;width:17px;height:17px;background:#cdcdcd;"></div>
<svg style="left:1279px;top:689px" width="6" height="9" viewBox="0 0 6 9"><path d="M5 1L1.5 4.5L5 8" fill="none" stroke="#505050" stroke-width="1.5"/></svg>
<svg style="left:1328px;top:689px" width="6" height="9" viewBox="0 0 6 9"><path d="M1 1L4.5 4.5L1 8" fill="none" stroke="#505050" stroke-width="1.5"/></svg>
<div style="left:1341px;top:684px;width:18px;height:20px;background:#f0f0f0;"></div>
<span class="tx f-mono" style="left:19px;top:660px;height:20px;line-height:20px;font-size:13.3px;color:#1a1a1a;">Команда: _mtedit</span>
<span class="tx f-mono" style="left:19px;top:685px;height:20px;line-height:20px;font-size:13.3px;color:#1a1a1a;">Команда: </span>
<div style="left:90px;top:685px;width:2px;height:17px;background:#000;"></div>
<div style="left:0px;top:704px;width:1366px;height:1px;background:#a0a0a0;"></div>
<div style="left:0px;top:705px;width:1366px;height:1px;background:#ffffff;"></div>
<!-- status bar -->
<span class="tx" style="left:7px;top:710px;height:18px;line-height:18px;font-size:12px;transform:scaleX(0.9141);transform-origin:0 0;">Панель Редактирование</span>
<!-- taskbar -->
<div style="left:0px;top:728px;width:1366px;height:40px;background:#795d42;"></div>
<div style="left:0px;top:728px;width:1366px;height:1px;background:#6e543b;"></div>
<div style="left:17px;top:729px;width:54px;height:39px;background:#8f7a67;border:1px solid #b3a393;"></div>
<div style="left:71px;top:729px;width:5px;height:39px;background:#8f7a67;border:1px solid #b3a393;"></div>
<div style="left:141px;top:729px;width:58px;height:39px;background:#8f7a67;border:1px solid #b3a393;"></div>
<div style="left:451px;top:729px;width:51px;height:39px;background:#8f7a67;border:1px solid #b3a393;"></div>
<div style="left:502px;top:729px;width:3px;height:39px;background:#8f7a67;border:1px solid #b3a393;border-left:none;"></div>
<div style="left:505px;top:729px;width:3px;height:39px;background:#8f7a67;border:1px solid #b3a393;border-left:none;"></div>
<div style="left:699px;top:729px;width:58px;height:39px;background:#8f7a67;border:1px solid #b3a393;"></div>
<div style="left:885px;top:729px;width:58px;height:39px;background:linear-gradient(#a08d7b,#b0a090);border:1px solid #efe9e2;box-shadow:inset 0 0 0 1px rgba(255,255,255,.35);"></div>
<div style="left:947px;top:729px;width:58px;height:39px;background:#8f7a67;border:1px solid #b3a393;"></div>
<span class="tx f-serif" style="left:331px;top:748px;font-size:15px;line-height:16px;font-weight:bold;color:#fff;opacity:.13;filter:blur(.6px);letter-spacing:1px">B&nbsp;&nbsp;&nbsp;&nbsp;c·dem</span>
<svg style="left:27px;top:732px" width="32" height="32" viewBox="0 0 32 32"><defs><linearGradient id="twa" x1="0" y1="0" x2="1" y2="1"><stop offset="0" stop-color="#6f9be0"/><stop offset="1" stop-color="#1f4fb0"/></linearGradient></defs><path d="M2 6C2 2 5 1 8 1H24V27H8C4 27 2 25 2 22Z" fill="url(#twa)"/><path d="M5 5C5 3 6 2.5 8 2.5H26V25H5Z" fill="#f4f7fc"/><path d="M9 6L31 3.5V29L9 31Z" fill="#fff" stroke="#c9d3e6" stroke-width="0.6"/><defs><linearGradient id="twb" x1="0" y1="0" x2="1" y2="1"><stop offset="0" stop-color="#ffffff"/><stop offset="1" stop-color="#dde6f4"/></linearGradient></defs><path d="M9 6L31 3.5V29L9 31Z" fill="url(#twb)"/><text x="16.5" y="17" font-family="Liberation Sans, sans-serif" font-weight="bold" font-style="italic" font-size="12" text-anchor="middle" fill="#1f3f9a">W</text><path d="M23 9.5H29M23 12.5H29M23 15.5H29M11 20H29M11 23H29M11 26H27" fill="none" stroke="#2a4fae" stroke-width="1.6"/></svg>
<svg style="left:92px;top:732px" width="32" height="32" viewBox="0 0 32 32"><path d="M27 10C30 5 28 2.5 22 4C13 6 5 14 2.5 21C0.5 26 3 28.5 7 27" fill="none" stroke="#e8a81c" stroke-width="2.4"/><defs><linearGradient id="tie" x1="0" y1="0" x2="0" y2="1"><stop offset="0" stop-color="#8adcf8"/><stop offset="1" stop-color="#1680d0"/></linearGradient></defs><path d="M26.5 21.5C24.5 26.5 20 28.5 16 28C10 27.5 6.5 22.5 7 17C7.5 11 12 7 17.5 7C23.5 7 27.5 12 27.5 17.5H10" fill="none" stroke="url(#tie)" stroke-width="5.2"/><path d="M2.5 21C5 14 13 6 22 4C28 2.5 30 5 27 10" fill="none" stroke="#f6c83a" stroke-width="2.2" stroke-dasharray="30 100"/></svg>
<svg style="left:154px;top:732px" width="32" height="32" viewBox="0 0 32 32"><defs><linearGradient id="tex" x1="0" y1="0" x2="0" y2="1"><stop offset="0" stop-color="#fbe9a0"/><stop offset="1" stop-color="#e8c860"/></linearGradient></defs><path d="M2 6H12L14 8H30V29H2Z" fill="url(#tex)" stroke="#c9a84a" stroke-width="0.8"/><path d="M12 5H20L22 8H12Z" fill="#f4e4a0"/><rect x="4" y="5.5" width="3" height="2" fill="#2ab84a"/><rect x="13" y="7" width="3" height="2" fill="#e83a2a"/><rect x="21" y="9" width="3" height="2" fill="#2a8ae8"/><path d="M4 12H28V29H4Z" fill="#fdf2c0"/><defs><linearGradient id="tex2" x1="0" y1="0" x2="0" y2="1"><stop offset="0" stop-color="#bfe6fa"/><stop offset="1" stop-color="#3f9ad8"/></linearGradient></defs><path d="M6 20C6 18 7 17.5 9 17.5H25C27 17.5 28 18 28 20V31H22V24H12V31H6Z" fill="url(#tex2)" stroke="#2a7ab8" stroke-width="0.8"/><path d="M10 13V23M5 18H15M6.5 14.5L13.5 21.5M13.5 14.5L6.5 21.5" fill="none" stroke="#fff" stroke-width="0.8"/></svg>
<svg style="left:216px;top:732px" width="32" height="32" viewBox="0 0 32 32"><rect x="0" y="0" width="31" height="32" fill="#f5821f"/><circle cx="15.5" cy="10.5" r="4.2" fill="none" stroke="#fff" stroke-width="3"/><path d="M9.5 17.5C13 20.5 18 20.5 21.5 17.5" fill="none" stroke="#fff" stroke-width="3.2" stroke-linecap="round"/><path d="M15.5 20.5L10.5 27M15.5 20.5L20.5 27" fill="none" stroke="#fff" stroke-width="3.2" stroke-linecap="round"/></svg>
<svg style="left:278px;top:732px" width="32" height="32" viewBox="0 0 32 32"><defs><radialGradient id="tk1" cx="0.5" cy="0.5" r="0.6"><stop offset="0" stop-color="#8a60c0"/><stop offset="1" stop-color="#3a2a8a"/></radialGradient></defs><circle cx="16" cy="16" r="15" fill="#c9c4d4"/><circle cx="16.5" cy="16" r="14" fill="url(#tk1)"/><path d="M16 2A14 14 0 0 1 30 16L16 16Z" fill="#2a5ab8"/><path d="M30 16A14 14 0 0 1 12 29.5L16 16Z" fill="#9a2ab0"/><defs><radialGradient id="tk2" cx="0.45" cy="0.4" r="0.7"><stop offset="0" stop-color="#7a7f86"/><stop offset="1" stop-color="#22262b"/></radialGradient></defs><circle cx="14.5" cy="16" r="11.5" fill="url(#tk2)"/><path d="M16 9L19 3" fill="none" stroke="#2ac8e8" stroke-width="1.6"/></svg>
<svg style="left:340px;top:732px" width="32" height="32" viewBox="0 0 32 32"><path d="M16 1L31 16L16 31L1 16Z" fill="#1a1a1a"/><path d="M16 4L28 16L16 28L4 16Z" fill="#fff"/><defs><linearGradient id="twn" x1="0" y1="0" x2="0" y2="1"><stop offset="0" stop-color="#fbd03a"/><stop offset="1" stop-color="#f08a1c"/></linearGradient></defs><path d="M28.5 3L8 12.5L15.5 15L2.5 30.5L24 19L16.5 16.5Z" fill="url(#twn)" stroke="#c8680a" stroke-width="0.7"/></svg>
<svg style="left:402px;top:732px" width="32" height="32" viewBox="0 0 32 32"><defs><clipPath id="tbc"><circle cx="16" cy="16" r="15"/></clipPath></defs><g clip-path="url(#tbc)"><rect x="0" y="0" width="32" height="32" fill="#8ed02a"/><path d="M0 12L20 0H0Z" fill="#f0a818"/><defs><linearGradient id="tbl" x1="0" y1="0" x2="1" y2="1"><stop offset="0" stop-color="#b8ee4a"/><stop offset="1" stop-color="#5ab81a"/></linearGradient></defs><path d="M0 14L24 -2L36 6L0 22Z" fill="url(#tbl)"/><path d="M0 22L34 8V18L4 32H0Z" fill="#f07a10"/><path d="M0 23L20 15L34 19L8 30Z" fill="#e85a10" fill-opacity="0.6"/><path d="M6 30L34 18V34H6Z" fill="#2a8ad8"/></g></svg>
<svg style="left:460px;top:732px" width="32" height="32" viewBox="0 0 32 32"><defs><radialGradient id="tag" cx="0.4" cy="0.3" r="0.8"><stop offset="0" stop-color="#4ad04a"/><stop offset="1" stop-color="#128a12"/></radialGradient></defs><path d="M4 31C7 29 9 27 9.5 24L15 27C12 30 8 31 4 31Z" fill="#128a12"/><circle cx="17" cy="15" r="14.5" fill="url(#tag)"/><circle cx="16.5" cy="15" r="4.5" fill="none" stroke="#fff" stroke-width="2.8"/><path d="M21.5 10V17C21.5 20.5 26.5 20 26.5 15C26.5 9 22 5 16.5 5C10.5 5 6.5 9.5 6.5 15C6.5 20.5 10.5 25 16.5 25C19 25 21 24.5 23 23" fill="none" stroke="#fff" stroke-width="2.6"/></svg>
<svg style="left:524px;top:732px" width="32" height="32" viewBox="0 0 32 32"><rect x="6" y="6" width="21" height="22" fill="#5a9ad8" stroke="#9cc6ee" stroke-width="1"/><rect x="3" y="5" width="21" height="23" fill="#8abce8" stroke="#c4dcf4" stroke-width="1"/><defs><radialGradient id="twm" cx="0.4" cy="0.35" r="0.7"><stop offset="0" stop-color="#ffb04a"/><stop offset="1" stop-color="#e8640a"/></radialGradient></defs><circle cx="12.5" cy="16.5" r="8.5" fill="url(#twm)"/><path d="M9.5 11.5L18 16.5L9.5 21.5Z" fill="#fff"/></svg>
<svg style="left:588px;top:732px" width="32" height="32" viewBox="0 0 32 32"><circle cx="16" cy="16" r="14.5" fill="#f4c81c"/><path d="M16 16L3.44 8.75A14.5 14.5 0 0 1 28.56 8.75Z" fill="#e03a2a"/><path d="M3.44 8.75A14.5 14.5 0 0 0 16 30.5L22 19.5L16 16Z" fill="#3aa84a"/><path d="M3.44 8.75L10 19.5L16 30.5L19 22Z" fill="#3aa84a"/><path d="M16 1.5A14.5 14.5 0 0 1 28.56 8.75H16Z" fill="#e03a2a"/><circle cx="16" cy="16" r="6.8" fill="#f4f4f4"/><defs><radialGradient id="tch" cx="0.4" cy="0.3" r="0.8"><stop offset="0" stop-color="#7ab0f0"/><stop offset="1" stop-color="#2a64c8"/></radialGradient></defs><circle cx="16" cy="16" r="5.4" fill="url(#tch)"/></svg>
<svg style="left:650px;top:732px" width="32" height="32" viewBox="0 0 32 32"><defs><linearGradient id="tyx" x1="0" y1="0" x2="0" y2="1"><stop offset="0" stop-color="#ffffff"/><stop offset="1" stop-color="#d4d4d4"/></linearGradient></defs><path d="M2 1H22L31.5 16L22 31H2C0.8 31 0.5 30.5 0.5 29V3C0.5 1.5 0.8 1 2 1Z" fill="url(#tyx)" stroke="#a8a8a8" stroke-width="0.8"/><text x="0" y="0" transform="translate(12.5 27) scale(0.78 1)" font-family="Liberation Sans, sans-serif" font-size="31" text-anchor="middle" fill="#e81c1c">Я</text></svg>
<svg style="left:712px;top:732px" width="32" height="32" viewBox="0 0 32 32"><defs><linearGradient id="tsd" x1="0" y1="0" x2="0" y2="1"><stop offset="0" stop-color="#7ab0e4"/><stop offset="1" stop-color="#3a74b8"/></linearGradient></defs><path d="M2 0.5H22L31.5 16L22 31.5H2C0.8 31.5 0.5 31 0.5 29.5V2.5C0.5 1 0.8 0.5 2 0.5Z" fill="url(#tsd)"/><path d="M4 12H9L15 6.5V25.5L9 20H4Z" fill="#fff"/><path d="M17.5 12.5C19 14.5 19 17.5 17.5 19.5" fill="none" stroke="#fff" stroke-width="1.5"/><path d="M19 8C23.5 12 23.5 20 19 24" fill="none" stroke="#fff" stroke-width="2.4"/></svg>
<svg style="left:773px;top:732px" width="32" height="32" viewBox="0 0 32 32"><defs><linearGradient id="tga" x1="0" y1="0" x2="0" y2="1"><stop offset="0" stop-color="#5af05a"/><stop offset="1" stop-color="#0a9a0a"/></linearGradient></defs><path d="M11 2H21L31 27V30H22L20.5 25H10.5L8.5 30H1V27ZM12.5 18.5H18.5L15.5 10Z" fill="url(#tga)" stroke="#0a7a0a" stroke-width="0.8"/></svg>
<svg style="left:836px;top:732px" width="32" height="32" viewBox="0 0 32 32"><defs><radialGradient id="tyb" cx="0.4" cy="0.3" r="0.85"><stop offset="0" stop-color="#ffffff"/><stop offset="1" stop-color="#c4c4c4"/></radialGradient></defs><circle cx="16" cy="16" r="15.5" fill="url(#tyb)"/><path d="M4 4.5L16 16L30 6.5M16 16L15.5 31.5" fill="none" stroke="#e8101c" stroke-width="5.5" stroke-linejoin="round"/></svg>
<svg style="left:898px;top:732px" width="32" height="32" viewBox="0 0 32 32"><rect x="0" y="0" width="32" height="32" fill="#fff"/><defs><linearGradient id="tac" x1="0" y1="0" x2="1" y2="1"><stop offset="0" stop-color="#2ab0a0"/><stop offset="1" stop-color="#0a6a62"/></linearGradient></defs><rect x="2" y="2" width="28" height="28" fill="url(#tac)"/><path d="M4 30L11.5 3H15.5L21.5 30" fill="none" stroke="#d4f0ec" stroke-width="3.2"/><path d="M12 3H16L21 8L19 18Z" fill="#2a8a80" fill-opacity="0.7"/><path d="M2 22.5H30M22.5 2V30M2 17.5H18" fill="none" stroke="#fff" stroke-width="1.6"/><rect x="19.5" y="19.5" width="6" height="6" fill="#0a8a80" stroke="#fff" stroke-width="1.4"/><rect x="21.8" y="21.8" width="1.5" height="1.5" fill="#fff"/></svg>
<svg style="left:960px;top:732px" width="32" height="32" viewBox="0 0 32 32"><path d="M0.5 2H8V4H3V9H0.5ZM30.5 2H23V4H28V9H30.5ZM0.5 27H8V25H3V20H0.5ZM30.5 27H23V25H28V20H30.5Z" fill="#3a9ae0" stroke="#2a7ac0" stroke-width="0.6"/><rect x="3" y="4" width="25" height="21" rx="1.5" fill="#fff"/><defs><linearGradient id="tph" x1="0" y1="0" x2="0" y2="1"><stop offset="0" stop-color="#5aa8e8"/><stop offset="1" stop-color="#c4e4f8"/></linearGradient></defs><rect x="4" y="5" width="23" height="19" fill="url(#tph)"/><path d="M4 15C8 12 12 12.5 16 15.5C20 17 24 18 27 17.5V24H4Z" fill="#2a6a4a"/><path d="M4 18.5C12 18 20 19.5 27 18.5V24H4Z" fill="#3a7aa8"/><path d="M18 6.5C20 5.5 23 6 24 7.5C22 8.5 19 8 18 6.5Z" fill="#fff" fill-opacity="0.8"/></svg>
<svg style="left:1123px;top:746px" width="9" height="5" viewBox="0 0 9 5"><path d="M0.5 5L4.5 0.5L8.5 5Z" fill="#fff"/></svg>
<svg style="left:1144px;top:740px" width="18" height="18" viewBox="0 0 18 18"><g stroke="#3a2a1c" stroke-width="0.8" paint-order="stroke"><rect x="1" y="1.5" width="1.4" height="4" fill="#fff"/><rect x="4.6" y="1.5" width="1.4" height="4" fill="#fff"/><rect x="0.3" y="5" width="6.4" height="3.5" rx="0.8" fill="#fff"/><rect x="2.8" y="8" width="1.5" height="8.5" fill="#fff"/><path d="M10 1.5H13.5V2.5H15.5V16.5H8V2.5H10ZM9.5 4V15H14V4Z" fill="#fff" fill-rule="evenodd"/><rect x="10.3" y="5" width="3" height="9" fill="#fff"/></g></svg>
<svg style="left:1167px;top:740px" width="18" height="18" viewBox="0 0 18 18"><g stroke="#3a2a1c" stroke-width="0.8" paint-order="stroke"><rect x="1" y="1.5" width="1.6" height="15" fill="#fff"/><path d="M3.5 3C6 1.5 8 4.5 11 3.5L15.5 4.5V6.5L11 9C8 10 6 8 3.5 9.5Z" fill="#f4f4f4"/></g><circle cx="11.5" cy="12.5" r="4.6" fill="#e0141e" stroke="#fff" stroke-width="0.5"/><path d="M9.7 10.7L13.3 14.3M13.3 10.7L9.7 14.3" fill="none" stroke="#fff" stroke-width="1.7"/></svg>
<svg style="left:1191px;top:740px" width="18" height="18" viewBox="0 0 18 18"><g stroke="#3a2a1c" stroke-width="0.6"><rect x="1.3" y="13" width="2.6" height="3" fill="#868686"/><rect x="5" y="9.7" width="2.6" height="6.3" fill="#868686"/><rect x="8.7" y="6.4" width="2.6" height="9.6" fill="#868686"/><rect x="12.4" y="3.1" width="2.6" height="12.9" fill="#868686"/></g><path d="M4.5 1.5V7.5M1.9 3L7.1 6M7.1 3L1.9 6" fill="none" stroke="#fff" stroke-width="1.2"/></svg>
<svg style="left:1215px;top:740px" width="18" height="18" viewBox="0 0 18 18"><g stroke="#3a2a1c" stroke-width="0.8" paint-order="stroke"><path d="M1.5 6H4.5L8.5 2V16L4.5 12H1.5Z" fill="#fff"/></g><path d="M10.5 6.5C11.7 8 11.7 10 10.5 11.5" fill="none" stroke="#fff" stroke-width="1.2"/><path d="M12.5 4C15.2 6.8 15.2 11.2 12.5 14" fill="none" stroke="#fff" stroke-width="1.3"/></svg>
<span class="tx" style="left:1247px;top:741px;height:18px;line-height:18px;font-size:12px;color:#fff;transform:scaleX(0.9363);transform-origin:0 0;">РУС</span>
<span class="tx" style="left:1303px;top:732px;height:18px;line-height:18px;font-size:12px;color:#fff;transform:scaleX(0.9348);transform-origin:0 0;">5:11</span>
<span class="tx" style="left:1286px;top:749px;height:18px;line-height:18px;font-size:12px;color:#fff;transform:scaleX(0.9074);transform-origin:0 0;">04.01.2014</span>
</body></html>
